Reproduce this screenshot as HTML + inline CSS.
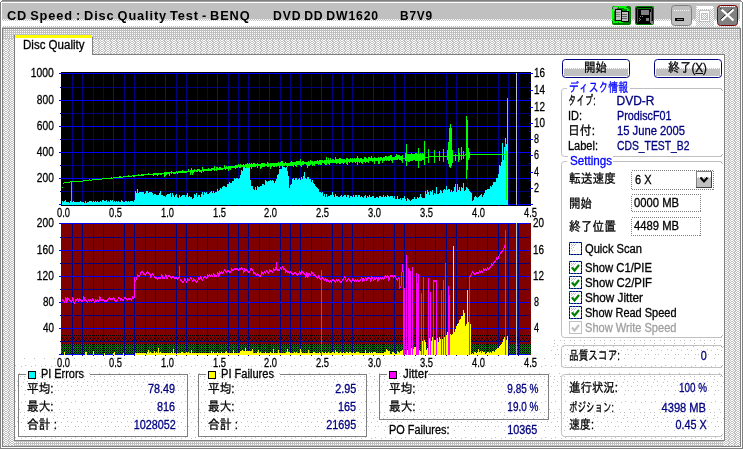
<!DOCTYPE html><html><head><meta charset="utf-8"><title>CD Speed : Disc Quality Test</title><style>
html,body{margin:0;padding:0;background:#c0c0c0}body{width:743px;height:449px;overflow:hidden;position:relative;font-family:"Liberation Sans","IPAGothic","Noto Sans CJK JP",sans-serif}
#bg{position:absolute;left:0;top:0}#tx{position:absolute;left:0;top:0;width:743px;height:449px;will-change:transform}
.t{position:absolute;white-space:pre;line-height:16px;height:16px;display:block;-webkit-text-stroke:0.3px}
.l{transform-origin:0 0}.r{transform-origin:100% 0}.b{font-weight:bold}
</style></head><body>
<svg id="bg" width="743" height="449" viewBox="0 0 743 449" shape-rendering="crispEdges">

<defs>
<pattern id="dz" width="6" height="4" patternUnits="userSpaceOnUse"><rect width="6" height="4" fill="#c0c0c0"/><g fill="#fff"><rect x="0" y="0" width="1" height="1"/><rect x="3" y="0" width="1" height="1"/><rect x="1" y="1" width="1" height="1"/><rect x="4" y="1" width="1" height="1"/><rect x="2" y="2" width="1" height="1"/><rect x="5" y="2" width="1" height="1"/><rect x="1" y="3" width="1" height="1"/><rect x="4" y="3" width="1" height="1"/><rect x="5" y="0" width="1" height="1"/><rect x="0" y="2" width="1" height="1"/></g></pattern>
<pattern id="q25" width="2" height="2" patternUnits="userSpaceOnUse">
<rect width="2" height="2" fill="#c0c0c0"/><rect x="0" y="1" width="1" height="1" fill="#fff"/>
</pattern>
<pattern id="q25b" width="2" height="2" patternUnits="userSpaceOnUse">
<rect width="2" height="2" fill="#c0c0c0"/><rect x="1" y="0" width="1" height="1" fill="#fff"/>
</pattern>
<pattern id="ck" width="2" height="2" patternUnits="userSpaceOnUse">
<rect width="2" height="2" fill="#c0c0c0"/><rect x="0" y="0" width="1" height="1" fill="#fff"/><rect x="1" y="1" width="1" height="1" fill="#fff"/>
</pattern>
<pattern id="gk" width="4" height="4" patternUnits="userSpaceOnUse">
<rect width="4" height="4" fill="#008000"/><g fill="#000">
<rect x="0" y="0" width="1" height="1"/><rect x="2" y="0" width="1" height="1"/>
<rect x="1" y="1" width="1" height="1"/><rect x="3" y="1" width="1" height="1"/>
<rect x="0" y="2" width="1" height="1"/><rect x="2" y="2" width="1" height="1"/>
<rect x="3" y="3" width="1" height="1"/></g>
</pattern>
<pattern id="rk" x="61" y="335" width="4" height="6" patternUnits="userSpaceOnUse">
<rect width="4" height="6" fill="#800000"/><g fill="#000">
<rect x="1" y="0" width="1" height="1"/><rect x="3" y="0" width="1" height="1"/>
<rect x="0" y="2" width="1" height="1"/><rect x="2" y="2" width="1" height="1"/>
<rect x="1" y="3" width="1" height="1"/>
<rect x="2" y="4" width="1" height="1"/><rect x="0" y="4" width="1" height="1"/>
<rect x="3" y="5" width="1" height="1"/></g>
</pattern>
<pattern id="dots" width="10" height="36" patternUnits="userSpaceOnUse">
<g fill="#c0c0c0">
<rect x="1" y="6" width="1" height="1"/><rect x="5" y="5" width="1" height="1"/>
<rect x="9" y="13" width="1" height="1"/>
<rect x="0" y="16" width="1" height="1"/><rect x="4" y="16" width="1" height="1"/>
<rect x="4" y="19" width="1" height="1"/>
<rect x="3" y="22" width="1" height="1"/><rect x="7" y="21" width="1" height="1"/>
<rect x="1" y="26" width="1" height="1"/><rect x="7" y="25" width="1" height="1"/>
<rect x="5" y="30" width="1" height="1"/><rect x="8" y="30" width="1" height="1"/>
<rect x="4" y="34" width="1" height="1"/>
</g>
</pattern>
</defs>
<rect x="0" y="0" width="743" height="449" fill="#c0c0c0"/>
<rect x="0" y="21" width="743" height="6" fill="#fff"/>
<rect x="2" y="19" width="739" height="2" fill="url(#ck)"/>
<rect x="0" y="0" width="743" height="1" fill="#808080"/>
<rect x="1" y="1" width="741" height="1" fill="#a0a0a0"/>
<rect x="2" y="2" width="739" height="1" fill="#fff"/>
<rect x="2" y="26" width="739" height="1" fill="url(#ck)"/>
<rect x="2" y="27" width="739" height="1" fill="#c0c0c0"/>
<rect x="2" y="28" width="739" height="1" fill="#808080"/>
<rect x="3" y="29" width="737" height="417" fill="url(#dz)"/>
<rect x="3" y="29" width="737" height="10" fill="url(#q25)"/>
<rect x="15" y="441" width="709" height="5" fill="url(#q25b)"/>
<rect x="0" y="0" width="1" height="449" fill="#808080"/>
<rect x="1" y="2" width="1" height="446" fill="#fff"/>
<rect x="2" y="28" width="1" height="419" fill="#808080"/>
<rect x="742" y="0" width="1" height="449" fill="#808080"/>
<rect x="741" y="2" width="1" height="446" fill="#fff"/>
<rect x="740" y="2" width="1" height="26" fill="#fff"/>
<rect x="740" y="28" width="1" height="419" fill="#808080"/>
<rect x="0" y="448" width="743" height="1" fill="#808080"/>
<rect x="1" y="447" width="741" height="1" fill="#fff"/>
<rect x="2" y="446" width="739" height="1" fill="#808080"/>
<rect x="0" y="0" width="2" height="1" fill="#fff"/>
<rect x="0" y="1" width="1" height="1" fill="#fff"/>
<rect x="741" y="0" width="2" height="1" fill="#fff"/>
<rect x="742" y="1" width="1" height="1" fill="#fff"/>
<path d="M0.5 4.5 L0.5 2.5 L2.5 0.5 L4.5 0.5" stroke="#808080" fill="none" shape-rendering="auto"/>
<path d="M742.5 4.5 L742.5 2.5 L740.5 0.5 L738.5 0.5" stroke="#808080" fill="none" shape-rendering="auto"/>
<rect x="15" y="55" width="709" height="385" fill="#fff"/>
<rect x="92" y="54" width="633" height="1" fill="#808080"/>
<rect x="14" y="35" width="1" height="406" fill="#808080"/>
<rect x="724" y="54" width="1" height="387" fill="#808080"/>
<rect x="14" y="440" width="711" height="1" fill="#808080"/>
<rect x="15" y="35" width="77" height="20" fill="#fff"/>
<rect x="15" y="35" width="77" height="3" fill="#ffff00"/>
<rect x="92" y="37" width="1" height="18" fill="#808080"/>
<rect x="15" y="357" width="709" height="83" fill="url(#dots)"/>
<rect x="551" y="338" width="173" height="102" fill="url(#dots)"/>
<rect x="612" y="6" width="19" height="19" rx="2" ry="2" fill="#008000" shape-rendering="auto"/>
<rect x="614" y="6" width="13" height="1" fill="#00ff00"/>
<rect x="619" y="7" width="8" height="1" fill="#00ff00"/>
<rect x="612" y="9" width="2" height="12" fill="#00ff00"/>
<rect x="613" y="21" width="10" height="2" fill="#00ff00"/>
<rect x="624" y="8" width="4" height="1" fill="#00ff00"/>
<rect x="627" y="9" width="2" height="3" fill="#00ff00"/>
<rect x="626" y="7" width="1" height="1" fill="#008000"/>
<rect x="628" y="8" width="1" height="1" fill="#008000"/>
<rect x="629" y="11" width="1" height="1" fill="#008000"/>
<rect x="628" y="14" width="1" height="1" fill="#008000"/>
<rect x="615" y="21" width="1" height="1" fill="#008000"/>
<rect x="618" y="22" width="1" height="1" fill="#008000"/>
<rect x="621" y="21" width="1" height="1" fill="#008000"/>
<rect x="613" y="19" width="1" height="1" fill="#008000"/>
<path d="M613 7 h5 l-5 5 z" fill="#a0a0a0"/>
<rect x="615" y="9" width="6" height="11" fill="#c0c0c0" stroke="#000" stroke-width="1"/>
<rect x="621" y="11" width="7" height="10" fill="#c0c0c0" stroke="#000" stroke-width="1"/>
<rect x="622" y="14" width="5" height="1" fill="#606060"/>
<rect x="622" y="16" width="5" height="1" fill="#606060"/>
<rect x="622" y="18" width="5" height="1" fill="#606060"/>
<rect x="616" y="12" width="4" height="1" fill="#808080"/>
<rect x="616" y="14" width="4" height="1" fill="#808080"/>
<rect x="616" y="16" width="4" height="1" fill="#808080"/>
<rect x="635" y="6" width="19" height="19" rx="2" ry="2" fill="#008000" shape-rendering="auto"/>
<rect x="636.5" y="7.5" width="16" height="16" rx="1.5" ry="1.5" fill="#008000" stroke="#000" shape-rendering="auto"/>
<rect x="638" y="9" width="13" height="14" fill="#000"/>
<rect x="641" y="10" width="8" height="5" fill="#808080"/>
<rect x="646" y="18" width="3" height="3" fill="#808080"/>
<rect x="650" y="12" width="1" height="11" fill="#808080"/>
<rect x="651" y="21" width="2" height="3" fill="#808080"/>
<rect x="640" y="16" width="1" height="1" fill="#808080"/>
<rect x="642" y="16" width="1" height="1" fill="#808080"/>
<rect x="639" y="18" width="1" height="1" fill="#808080"/>
<rect x="640" y="19" width="1" height="1" fill="#808080"/>
<rect x="639" y="20" width="1" height="1" fill="#808080"/>
<rect x="671.5" y="5.5" width="20" height="20" rx="3" ry="3" fill="#c0c0c0" stroke="#808080" shape-rendering="auto"/>
<rect x="673" y="10" width="17" height="1" fill="url(#ck)"/>
<rect x="675" y="18" width="9" height="3" fill="#000"/>
<rect x="677" y="19" width="6" height="1" fill="#808080"/>
<rect x="696" y="6" width="18" height="20" fill="url(#ck)"/>
<rect x="697" y="6" width="16" height="3" fill="#fff"/>
<rect x="699" y="10" width="11" height="12" fill="#c0c0c0"/>
<rect x="700" y="11" width="9" height="10" fill="#fff"/>
<rect x="701" y="13" width="7" height="7" fill="#c0c0c0"/>
<rect x="702" y="14" width="5" height="5" fill="url(#ck)"/>
<rect x="717.5" y="5.5" width="20" height="20" rx="3" ry="3" fill="#808080" stroke="#800000" shape-rendering="auto"/>
<rect x="720" y="6" width="15" height="1" fill="url(#ck)"/>
<path d="M720.5 8.5 L732.5 19.5 M732.5 8.5 L720.5 19.5" stroke="#000" stroke-width="1" fill="none" shape-rendering="auto"/>
<path d="M721.5 9.5 L733.5 20.5 M733.5 9.5 L721.5 20.5" stroke="#fff" stroke-width="2.2" fill="none" shape-rendering="auto"/>
<rect x="61" y="72" width="470" height="134" fill="#000"/>
<rect x="72" y="73" width="1" height="132" fill="#000080"/>
<rect x="82" y="73" width="1" height="132" fill="#000080"/>
<rect x="93" y="73" width="1" height="132" fill="#000080"/>
<rect x="103" y="73" width="1" height="132" fill="#000080"/>
<rect x="113" y="73" width="1" height="132" fill="#0000ff"/>
<rect x="124" y="73" width="1" height="132" fill="#000080"/>
<rect x="134" y="73" width="1" height="132" fill="#000080"/>
<rect x="145" y="73" width="1" height="132" fill="#000080"/>
<rect x="155" y="73" width="1" height="132" fill="#000080"/>
<rect x="165" y="73" width="1" height="132" fill="#0000ff"/>
<rect x="176" y="73" width="1" height="132" fill="#000080"/>
<rect x="186" y="73" width="1" height="132" fill="#000080"/>
<rect x="197" y="73" width="1" height="132" fill="#000080"/>
<rect x="207" y="73" width="1" height="132" fill="#000080"/>
<rect x="217" y="73" width="1" height="132" fill="#0000ff"/>
<rect x="228" y="73" width="1" height="132" fill="#000080"/>
<rect x="238" y="73" width="1" height="132" fill="#000080"/>
<rect x="248" y="73" width="1" height="132" fill="#000080"/>
<rect x="259" y="73" width="1" height="132" fill="#000080"/>
<rect x="269" y="73" width="1" height="132" fill="#0000ff"/>
<rect x="280" y="73" width="1" height="132" fill="#000080"/>
<rect x="290" y="73" width="1" height="132" fill="#000080"/>
<rect x="300" y="73" width="1" height="132" fill="#000080"/>
<rect x="311" y="73" width="1" height="132" fill="#000080"/>
<rect x="321" y="73" width="1" height="132" fill="#0000ff"/>
<rect x="332" y="73" width="1" height="132" fill="#000080"/>
<rect x="342" y="73" width="1" height="132" fill="#000080"/>
<rect x="352" y="73" width="1" height="132" fill="#000080"/>
<rect x="363" y="73" width="1" height="132" fill="#000080"/>
<rect x="373" y="73" width="1" height="132" fill="#0000ff"/>
<rect x="383" y="73" width="1" height="132" fill="#000080"/>
<rect x="394" y="73" width="1" height="132" fill="#000080"/>
<rect x="404" y="73" width="1" height="132" fill="#000080"/>
<rect x="415" y="73" width="1" height="132" fill="#000080"/>
<rect x="425" y="73" width="1" height="132" fill="#0000ff"/>
<rect x="435" y="73" width="1" height="132" fill="#000080"/>
<rect x="446" y="73" width="1" height="132" fill="#000080"/>
<rect x="456" y="73" width="1" height="132" fill="#000080"/>
<rect x="467" y="73" width="1" height="132" fill="#000080"/>
<rect x="477" y="73" width="1" height="132" fill="#0000ff"/>
<rect x="487" y="73" width="1" height="132" fill="#000080"/>
<rect x="498" y="73" width="1" height="132" fill="#000080"/>
<rect x="508" y="73" width="1" height="132" fill="#000080"/>
<rect x="518" y="73" width="1" height="132" fill="#000080"/>
<rect x="59" y="204" width="472" height="1" fill="#0000ff"/>
<rect x="60" y="191" width="471" height="1" fill="#000080"/>
<rect x="59" y="178" width="472" height="1" fill="#0000ff"/>
<rect x="60" y="165" width="471" height="1" fill="#000080"/>
<rect x="59" y="152" width="472" height="1" fill="#0000ff"/>
<rect x="60" y="139" width="471" height="1" fill="#000080"/>
<rect x="59" y="126" width="472" height="1" fill="#0000ff"/>
<rect x="60" y="113" width="471" height="1" fill="#000080"/>
<rect x="59" y="100" width="472" height="1" fill="#0000ff"/>
<rect x="60" y="87" width="471" height="1" fill="#000080"/>
<rect x="59" y="73" width="472" height="1" fill="#0000ff"/>
<rect x="72" y="205" width="1" height="1" fill="#000080"/>
<rect x="82" y="205" width="1" height="1" fill="#000080"/>
<rect x="93" y="205" width="1" height="1" fill="#000080"/>
<rect x="103" y="205" width="1" height="1" fill="#000080"/>
<rect x="113" y="205" width="1" height="1" fill="#0000ff"/>
<rect x="124" y="205" width="1" height="1" fill="#000080"/>
<rect x="134" y="205" width="1" height="1" fill="#000080"/>
<rect x="145" y="205" width="1" height="1" fill="#000080"/>
<rect x="155" y="205" width="1" height="1" fill="#000080"/>
<rect x="165" y="205" width="1" height="1" fill="#0000ff"/>
<rect x="176" y="205" width="1" height="1" fill="#000080"/>
<rect x="186" y="205" width="1" height="1" fill="#000080"/>
<rect x="197" y="205" width="1" height="1" fill="#000080"/>
<rect x="207" y="205" width="1" height="1" fill="#000080"/>
<rect x="217" y="205" width="1" height="1" fill="#0000ff"/>
<rect x="228" y="205" width="1" height="1" fill="#000080"/>
<rect x="238" y="205" width="1" height="1" fill="#000080"/>
<rect x="248" y="205" width="1" height="1" fill="#000080"/>
<rect x="259" y="205" width="1" height="1" fill="#000080"/>
<rect x="269" y="205" width="1" height="1" fill="#0000ff"/>
<rect x="280" y="205" width="1" height="1" fill="#000080"/>
<rect x="290" y="205" width="1" height="1" fill="#000080"/>
<rect x="300" y="205" width="1" height="1" fill="#000080"/>
<rect x="311" y="205" width="1" height="1" fill="#000080"/>
<rect x="321" y="205" width="1" height="1" fill="#0000ff"/>
<rect x="332" y="205" width="1" height="1" fill="#000080"/>
<rect x="342" y="205" width="1" height="1" fill="#000080"/>
<rect x="352" y="205" width="1" height="1" fill="#000080"/>
<rect x="363" y="205" width="1" height="1" fill="#000080"/>
<rect x="373" y="205" width="1" height="1" fill="#0000ff"/>
<rect x="383" y="205" width="1" height="1" fill="#000080"/>
<rect x="394" y="205" width="1" height="1" fill="#000080"/>
<rect x="404" y="205" width="1" height="1" fill="#000080"/>
<rect x="415" y="205" width="1" height="1" fill="#000080"/>
<rect x="425" y="205" width="1" height="1" fill="#0000ff"/>
<rect x="435" y="205" width="1" height="1" fill="#000080"/>
<rect x="446" y="205" width="1" height="1" fill="#000080"/>
<rect x="456" y="205" width="1" height="1" fill="#000080"/>
<rect x="467" y="205" width="1" height="1" fill="#000080"/>
<rect x="477" y="205" width="1" height="1" fill="#0000ff"/>
<rect x="487" y="205" width="1" height="1" fill="#000080"/>
<rect x="498" y="205" width="1" height="1" fill="#000080"/>
<rect x="508" y="205" width="1" height="1" fill="#000080"/>
<rect x="518" y="205" width="1" height="1" fill="#000080"/>
<rect x="529" y="204" width="4" height="1" fill="#0000ff"/>
<rect x="529" y="196" width="2" height="1" fill="#0000ff"/>
<rect x="529" y="188" width="4" height="1" fill="#0000ff"/>
<rect x="529" y="180" width="2" height="1" fill="#0000ff"/>
<rect x="529" y="172" width="4" height="1" fill="#0000ff"/>
<rect x="529" y="163" width="2" height="1" fill="#0000ff"/>
<rect x="529" y="155" width="4" height="1" fill="#0000ff"/>
<rect x="529" y="147" width="2" height="1" fill="#0000ff"/>
<rect x="529" y="139" width="4" height="1" fill="#0000ff"/>
<rect x="529" y="131" width="2" height="1" fill="#0000ff"/>
<rect x="529" y="123" width="4" height="1" fill="#0000ff"/>
<rect x="529" y="115" width="2" height="1" fill="#0000ff"/>
<rect x="529" y="107" width="4" height="1" fill="#0000ff"/>
<rect x="529" y="98" width="2" height="1" fill="#0000ff"/>
<rect x="529" y="90" width="4" height="1" fill="#0000ff"/>
<rect x="529" y="82" width="2" height="1" fill="#0000ff"/>
<rect x="529" y="73" width="4" height="1" fill="#0000ff"/>
<rect x="62" y="201" width="1" height="4" fill="#00ffff"/>
<rect x="63" y="202" width="1" height="3" fill="#00ffff"/>
<rect x="64" y="201" width="1" height="4" fill="#00ffff"/>
<rect x="65" y="200" width="1" height="5" fill="#00ffff"/>
<rect x="66" y="202" width="1" height="3" fill="#00ffff"/>
<rect x="67" y="202" width="1" height="3" fill="#00ffff"/>
<rect x="68" y="202" width="1" height="3" fill="#00ffff"/>
<rect x="69" y="203" width="1" height="2" fill="#00ffff"/>
<rect x="70" y="201" width="1" height="4" fill="#00ffff"/>
<rect x="71" y="201" width="1" height="4" fill="#00ffff"/>
<rect x="72" y="202" width="1" height="3" fill="#00ffff"/>
<rect x="73" y="201" width="1" height="4" fill="#00ffff"/>
<rect x="74" y="202" width="1" height="3" fill="#00ffff"/>
<rect x="75" y="202" width="1" height="3" fill="#00ffff"/>
<rect x="76" y="202" width="1" height="3" fill="#00ffff"/>
<rect x="77" y="202" width="1" height="3" fill="#00ffff"/>
<rect x="78" y="202" width="1" height="3" fill="#00ffff"/>
<rect x="79" y="202" width="1" height="3" fill="#00ffff"/>
<rect x="80" y="201" width="1" height="4" fill="#00ffff"/>
<rect x="81" y="202" width="1" height="3" fill="#00ffff"/>
<rect x="82" y="202" width="1" height="3" fill="#00ffff"/>
<rect x="83" y="202" width="1" height="3" fill="#00ffff"/>
<rect x="84" y="203" width="1" height="2" fill="#00ffff"/>
<rect x="85" y="201" width="1" height="4" fill="#00ffff"/>
<rect x="86" y="203" width="1" height="2" fill="#00ffff"/>
<rect x="87" y="202" width="1" height="3" fill="#00ffff"/>
<rect x="88" y="202" width="1" height="3" fill="#00ffff"/>
<rect x="89" y="201" width="1" height="4" fill="#00ffff"/>
<rect x="90" y="201" width="1" height="4" fill="#00ffff"/>
<rect x="91" y="201" width="1" height="4" fill="#00ffff"/>
<rect x="92" y="202" width="1" height="3" fill="#00ffff"/>
<rect x="93" y="201" width="1" height="4" fill="#00ffff"/>
<rect x="94" y="202" width="1" height="3" fill="#00ffff"/>
<rect x="95" y="201" width="1" height="4" fill="#00ffff"/>
<rect x="96" y="202" width="1" height="3" fill="#00ffff"/>
<rect x="97" y="201" width="1" height="4" fill="#00ffff"/>
<rect x="98" y="202" width="1" height="3" fill="#00ffff"/>
<rect x="99" y="202" width="1" height="3" fill="#00ffff"/>
<rect x="100" y="201" width="1" height="4" fill="#00ffff"/>
<rect x="101" y="202" width="1" height="3" fill="#00ffff"/>
<rect x="102" y="200" width="1" height="5" fill="#00ffff"/>
<rect x="103" y="200" width="1" height="5" fill="#00ffff"/>
<rect x="104" y="201" width="1" height="4" fill="#00ffff"/>
<rect x="105" y="201" width="1" height="4" fill="#00ffff"/>
<rect x="106" y="200" width="1" height="5" fill="#00ffff"/>
<rect x="107" y="202" width="1" height="3" fill="#00ffff"/>
<rect x="108" y="201" width="1" height="4" fill="#00ffff"/>
<rect x="109" y="202" width="1" height="3" fill="#00ffff"/>
<rect x="110" y="200" width="1" height="5" fill="#00ffff"/>
<rect x="111" y="201" width="1" height="4" fill="#00ffff"/>
<rect x="112" y="200" width="1" height="5" fill="#00ffff"/>
<rect x="113" y="202" width="1" height="3" fill="#00ffff"/>
<rect x="114" y="201" width="1" height="4" fill="#00ffff"/>
<rect x="115" y="202" width="1" height="3" fill="#00ffff"/>
<rect x="116" y="201" width="1" height="4" fill="#00ffff"/>
<rect x="117" y="202" width="1" height="3" fill="#00ffff"/>
<rect x="118" y="201" width="1" height="4" fill="#00ffff"/>
<rect x="119" y="202" width="1" height="3" fill="#00ffff"/>
<rect x="120" y="202" width="1" height="3" fill="#00ffff"/>
<rect x="121" y="200" width="1" height="5" fill="#00ffff"/>
<rect x="122" y="201" width="1" height="4" fill="#00ffff"/>
<rect x="123" y="202" width="1" height="3" fill="#00ffff"/>
<rect x="124" y="202" width="1" height="3" fill="#00ffff"/>
<rect x="125" y="201" width="1" height="4" fill="#00ffff"/>
<rect x="126" y="201" width="1" height="4" fill="#00ffff"/>
<rect x="127" y="202" width="1" height="3" fill="#00ffff"/>
<rect x="128" y="201" width="1" height="4" fill="#00ffff"/>
<rect x="129" y="202" width="1" height="3" fill="#00ffff"/>
<rect x="130" y="201" width="1" height="4" fill="#00ffff"/>
<rect x="131" y="201" width="1" height="4" fill="#00ffff"/>
<rect x="132" y="201" width="1" height="4" fill="#00ffff"/>
<rect x="133" y="202" width="1" height="3" fill="#00ffff"/>
<rect x="134" y="200" width="1" height="5" fill="#00ffff"/>
<rect x="135" y="191" width="1" height="14" fill="#00ffff"/>
<rect x="136" y="193" width="1" height="12" fill="#00ffff"/>
<rect x="137" y="189" width="1" height="16" fill="#00ffff"/>
<rect x="138" y="193" width="1" height="12" fill="#00ffff"/>
<rect x="139" y="192" width="1" height="13" fill="#00ffff"/>
<rect x="140" y="192" width="1" height="13" fill="#00ffff"/>
<rect x="141" y="192" width="1" height="13" fill="#00ffff"/>
<rect x="142" y="192" width="1" height="13" fill="#00ffff"/>
<rect x="143" y="192" width="1" height="13" fill="#00ffff"/>
<rect x="144" y="194" width="1" height="11" fill="#00ffff"/>
<rect x="145" y="193" width="1" height="12" fill="#00ffff"/>
<rect x="146" y="191" width="1" height="14" fill="#00ffff"/>
<rect x="147" y="191" width="1" height="14" fill="#00ffff"/>
<rect x="148" y="193" width="1" height="12" fill="#00ffff"/>
<rect x="149" y="192" width="1" height="13" fill="#00ffff"/>
<rect x="150" y="192" width="1" height="13" fill="#00ffff"/>
<rect x="151" y="192" width="1" height="13" fill="#00ffff"/>
<rect x="152" y="193" width="1" height="12" fill="#00ffff"/>
<rect x="153" y="195" width="1" height="10" fill="#00ffff"/>
<rect x="154" y="194" width="1" height="11" fill="#00ffff"/>
<rect x="155" y="194" width="1" height="11" fill="#00ffff"/>
<rect x="156" y="195" width="1" height="10" fill="#00ffff"/>
<rect x="157" y="195" width="1" height="10" fill="#00ffff"/>
<rect x="158" y="195" width="1" height="10" fill="#00ffff"/>
<rect x="159" y="193" width="1" height="12" fill="#00ffff"/>
<rect x="160" y="191" width="1" height="14" fill="#00ffff"/>
<rect x="161" y="195" width="1" height="10" fill="#00ffff"/>
<rect x="162" y="195" width="1" height="10" fill="#00ffff"/>
<rect x="163" y="196" width="1" height="9" fill="#00ffff"/>
<rect x="164" y="196" width="1" height="9" fill="#00ffff"/>
<rect x="165" y="197" width="1" height="8" fill="#00ffff"/>
<rect x="166" y="195" width="1" height="10" fill="#00ffff"/>
<rect x="167" y="194" width="1" height="11" fill="#00ffff"/>
<rect x="168" y="194" width="1" height="11" fill="#00ffff"/>
<rect x="169" y="194" width="1" height="11" fill="#00ffff"/>
<rect x="170" y="193" width="1" height="12" fill="#00ffff"/>
<rect x="171" y="197" width="1" height="8" fill="#00ffff"/>
<rect x="172" y="193" width="1" height="12" fill="#00ffff"/>
<rect x="173" y="195" width="1" height="10" fill="#00ffff"/>
<rect x="174" y="197" width="1" height="8" fill="#00ffff"/>
<rect x="175" y="195" width="1" height="10" fill="#00ffff"/>
<rect x="176" y="194" width="1" height="11" fill="#00ffff"/>
<rect x="177" y="197" width="1" height="8" fill="#00ffff"/>
<rect x="178" y="198" width="1" height="7" fill="#00ffff"/>
<rect x="179" y="195" width="1" height="10" fill="#00ffff"/>
<rect x="180" y="197" width="1" height="8" fill="#00ffff"/>
<rect x="181" y="196" width="1" height="9" fill="#00ffff"/>
<rect x="182" y="195" width="1" height="10" fill="#00ffff"/>
<rect x="183" y="195" width="1" height="10" fill="#00ffff"/>
<rect x="184" y="195" width="1" height="10" fill="#00ffff"/>
<rect x="185" y="197" width="1" height="8" fill="#00ffff"/>
<rect x="186" y="195" width="1" height="10" fill="#00ffff"/>
<rect x="187" y="193" width="1" height="12" fill="#00ffff"/>
<rect x="188" y="197" width="1" height="8" fill="#00ffff"/>
<rect x="189" y="196" width="1" height="9" fill="#00ffff"/>
<rect x="190" y="197" width="1" height="8" fill="#00ffff"/>
<rect x="191" y="197" width="1" height="8" fill="#00ffff"/>
<rect x="192" y="199" width="1" height="6" fill="#00ffff"/>
<rect x="193" y="198" width="1" height="7" fill="#00ffff"/>
<rect x="194" y="194" width="1" height="11" fill="#00ffff"/>
<rect x="195" y="195" width="1" height="10" fill="#00ffff"/>
<rect x="196" y="193" width="1" height="12" fill="#00ffff"/>
<rect x="197" y="197" width="1" height="8" fill="#00ffff"/>
<rect x="198" y="195" width="1" height="10" fill="#00ffff"/>
<rect x="199" y="195" width="1" height="10" fill="#00ffff"/>
<rect x="200" y="197" width="1" height="8" fill="#00ffff"/>
<rect x="201" y="194" width="1" height="11" fill="#00ffff"/>
<rect x="202" y="192" width="1" height="13" fill="#00ffff"/>
<rect x="203" y="195" width="1" height="10" fill="#00ffff"/>
<rect x="204" y="192" width="1" height="13" fill="#00ffff"/>
<rect x="205" y="193" width="1" height="12" fill="#00ffff"/>
<rect x="206" y="192" width="1" height="13" fill="#00ffff"/>
<rect x="207" y="194" width="1" height="11" fill="#00ffff"/>
<rect x="208" y="194" width="1" height="11" fill="#00ffff"/>
<rect x="209" y="193" width="1" height="12" fill="#00ffff"/>
<rect x="210" y="192" width="1" height="13" fill="#00ffff"/>
<rect x="211" y="191" width="1" height="14" fill="#00ffff"/>
<rect x="212" y="193" width="1" height="12" fill="#00ffff"/>
<rect x="213" y="191" width="1" height="14" fill="#00ffff"/>
<rect x="214" y="193" width="1" height="12" fill="#00ffff"/>
<rect x="215" y="192" width="1" height="13" fill="#00ffff"/>
<rect x="216" y="192" width="1" height="13" fill="#00ffff"/>
<rect x="217" y="189" width="1" height="16" fill="#00ffff"/>
<rect x="218" y="191" width="1" height="14" fill="#00ffff"/>
<rect x="219" y="190" width="1" height="15" fill="#00ffff"/>
<rect x="220" y="188" width="1" height="17" fill="#00ffff"/>
<rect x="221" y="189" width="1" height="16" fill="#00ffff"/>
<rect x="222" y="187" width="1" height="18" fill="#00ffff"/>
<rect x="223" y="186" width="1" height="19" fill="#00ffff"/>
<rect x="224" y="186" width="1" height="19" fill="#00ffff"/>
<rect x="225" y="187" width="1" height="18" fill="#00ffff"/>
<rect x="226" y="187" width="1" height="18" fill="#00ffff"/>
<rect x="227" y="184" width="1" height="21" fill="#00ffff"/>
<rect x="228" y="184" width="1" height="21" fill="#00ffff"/>
<rect x="229" y="182" width="1" height="23" fill="#00ffff"/>
<rect x="230" y="183" width="1" height="22" fill="#00ffff"/>
<rect x="231" y="183" width="1" height="22" fill="#00ffff"/>
<rect x="232" y="181" width="1" height="24" fill="#00ffff"/>
<rect x="233" y="181" width="1" height="24" fill="#00ffff"/>
<rect x="234" y="178" width="1" height="27" fill="#00ffff"/>
<rect x="235" y="179" width="1" height="26" fill="#00ffff"/>
<rect x="236" y="178" width="1" height="27" fill="#00ffff"/>
<rect x="237" y="178" width="1" height="27" fill="#00ffff"/>
<rect x="238" y="179" width="1" height="26" fill="#00ffff"/>
<rect x="239" y="178" width="1" height="27" fill="#00ffff"/>
<rect x="240" y="175" width="1" height="30" fill="#00ffff"/>
<rect x="241" y="170" width="1" height="35" fill="#00ffff"/>
<rect x="242" y="171" width="1" height="34" fill="#00ffff"/>
<rect x="243" y="168" width="1" height="37" fill="#00ffff"/>
<rect x="244" y="167" width="1" height="38" fill="#00ffff"/>
<rect x="245" y="168" width="1" height="37" fill="#00ffff"/>
<rect x="246" y="167" width="1" height="38" fill="#00ffff"/>
<rect x="247" y="166" width="1" height="39" fill="#00ffff"/>
<rect x="248" y="167" width="1" height="38" fill="#00ffff"/>
<rect x="249" y="165" width="1" height="40" fill="#00ffff"/>
<rect x="250" y="180" width="1" height="25" fill="#00ffff"/>
<rect x="251" y="186" width="1" height="19" fill="#00ffff"/>
<rect x="252" y="186" width="1" height="19" fill="#00ffff"/>
<rect x="253" y="189" width="1" height="16" fill="#00ffff"/>
<rect x="254" y="190" width="1" height="15" fill="#00ffff"/>
<rect x="255" y="187" width="1" height="18" fill="#00ffff"/>
<rect x="256" y="190" width="1" height="15" fill="#00ffff"/>
<rect x="257" y="186" width="1" height="19" fill="#00ffff"/>
<rect x="258" y="187" width="1" height="18" fill="#00ffff"/>
<rect x="259" y="187" width="1" height="18" fill="#00ffff"/>
<rect x="260" y="186" width="1" height="19" fill="#00ffff"/>
<rect x="261" y="186" width="1" height="19" fill="#00ffff"/>
<rect x="262" y="184" width="1" height="21" fill="#00ffff"/>
<rect x="263" y="184" width="1" height="21" fill="#00ffff"/>
<rect x="264" y="185" width="1" height="20" fill="#00ffff"/>
<rect x="265" y="180" width="1" height="25" fill="#00ffff"/>
<rect x="266" y="181" width="1" height="24" fill="#00ffff"/>
<rect x="267" y="182" width="1" height="23" fill="#00ffff"/>
<rect x="268" y="181" width="1" height="24" fill="#00ffff"/>
<rect x="269" y="181" width="1" height="24" fill="#00ffff"/>
<rect x="270" y="180" width="1" height="25" fill="#00ffff"/>
<rect x="271" y="181" width="1" height="24" fill="#00ffff"/>
<rect x="272" y="180" width="1" height="25" fill="#00ffff"/>
<rect x="273" y="181" width="1" height="24" fill="#00ffff"/>
<rect x="274" y="183" width="1" height="22" fill="#00ffff"/>
<rect x="275" y="181" width="1" height="24" fill="#00ffff"/>
<rect x="276" y="179" width="1" height="26" fill="#00ffff"/>
<rect x="277" y="175" width="1" height="30" fill="#00ffff"/>
<rect x="278" y="174" width="1" height="31" fill="#00ffff"/>
<rect x="279" y="169" width="1" height="36" fill="#00ffff"/>
<rect x="280" y="169" width="1" height="36" fill="#00ffff"/>
<rect x="281" y="169" width="1" height="36" fill="#00ffff"/>
<rect x="282" y="166" width="1" height="39" fill="#00ffff"/>
<rect x="283" y="167" width="1" height="38" fill="#00ffff"/>
<rect x="284" y="167" width="1" height="38" fill="#00ffff"/>
<rect x="285" y="168" width="1" height="37" fill="#00ffff"/>
<rect x="286" y="167" width="1" height="38" fill="#00ffff"/>
<rect x="287" y="171" width="1" height="34" fill="#00ffff"/>
<rect x="288" y="176" width="1" height="29" fill="#00ffff"/>
<rect x="289" y="188" width="1" height="17" fill="#00ffff"/>
<rect x="290" y="185" width="1" height="20" fill="#00ffff"/>
<rect x="291" y="184" width="1" height="21" fill="#00ffff"/>
<rect x="292" y="179" width="1" height="26" fill="#00ffff"/>
<rect x="293" y="178" width="1" height="27" fill="#00ffff"/>
<rect x="294" y="180" width="1" height="25" fill="#00ffff"/>
<rect x="295" y="178" width="1" height="27" fill="#00ffff"/>
<rect x="296" y="178" width="1" height="27" fill="#00ffff"/>
<rect x="297" y="180" width="1" height="25" fill="#00ffff"/>
<rect x="298" y="179" width="1" height="26" fill="#00ffff"/>
<rect x="299" y="178" width="1" height="27" fill="#00ffff"/>
<rect x="300" y="180" width="1" height="25" fill="#00ffff"/>
<rect x="301" y="177" width="1" height="28" fill="#00ffff"/>
<rect x="302" y="179" width="1" height="26" fill="#00ffff"/>
<rect x="303" y="176" width="1" height="29" fill="#00ffff"/>
<rect x="304" y="172" width="1" height="33" fill="#00ffff"/>
<rect x="305" y="178" width="1" height="27" fill="#00ffff"/>
<rect x="306" y="179" width="1" height="26" fill="#00ffff"/>
<rect x="307" y="177" width="1" height="28" fill="#00ffff"/>
<rect x="308" y="177" width="1" height="28" fill="#00ffff"/>
<rect x="309" y="179" width="1" height="26" fill="#00ffff"/>
<rect x="310" y="179" width="1" height="26" fill="#00ffff"/>
<rect x="311" y="182" width="1" height="23" fill="#00ffff"/>
<rect x="312" y="180" width="1" height="25" fill="#00ffff"/>
<rect x="313" y="183" width="1" height="22" fill="#00ffff"/>
<rect x="314" y="184" width="1" height="21" fill="#00ffff"/>
<rect x="315" y="186" width="1" height="19" fill="#00ffff"/>
<rect x="316" y="187" width="1" height="18" fill="#00ffff"/>
<rect x="317" y="188" width="1" height="17" fill="#00ffff"/>
<rect x="318" y="189" width="1" height="16" fill="#00ffff"/>
<rect x="319" y="192" width="1" height="13" fill="#00ffff"/>
<rect x="320" y="192" width="1" height="13" fill="#00ffff"/>
<rect x="321" y="193" width="1" height="12" fill="#00ffff"/>
<rect x="322" y="192" width="1" height="13" fill="#00ffff"/>
<rect x="323" y="196" width="1" height="9" fill="#00ffff"/>
<rect x="324" y="194" width="1" height="11" fill="#00ffff"/>
<rect x="325" y="197" width="1" height="8" fill="#00ffff"/>
<rect x="326" y="194" width="1" height="11" fill="#00ffff"/>
<rect x="327" y="197" width="1" height="8" fill="#00ffff"/>
<rect x="328" y="196" width="1" height="9" fill="#00ffff"/>
<rect x="329" y="196" width="1" height="9" fill="#00ffff"/>
<rect x="330" y="195" width="1" height="10" fill="#00ffff"/>
<rect x="331" y="195" width="1" height="10" fill="#00ffff"/>
<rect x="332" y="192" width="1" height="13" fill="#00ffff"/>
<rect x="333" y="195" width="1" height="10" fill="#00ffff"/>
<rect x="334" y="197" width="1" height="8" fill="#00ffff"/>
<rect x="335" y="194" width="1" height="11" fill="#00ffff"/>
<rect x="336" y="196" width="1" height="9" fill="#00ffff"/>
<rect x="337" y="196" width="1" height="9" fill="#00ffff"/>
<rect x="338" y="197" width="1" height="8" fill="#00ffff"/>
<rect x="339" y="197" width="1" height="8" fill="#00ffff"/>
<rect x="340" y="196" width="1" height="9" fill="#00ffff"/>
<rect x="341" y="195" width="1" height="10" fill="#00ffff"/>
<rect x="342" y="197" width="1" height="8" fill="#00ffff"/>
<rect x="343" y="196" width="1" height="9" fill="#00ffff"/>
<rect x="344" y="195" width="1" height="10" fill="#00ffff"/>
<rect x="345" y="195" width="1" height="10" fill="#00ffff"/>
<rect x="346" y="197" width="1" height="8" fill="#00ffff"/>
<rect x="347" y="195" width="1" height="10" fill="#00ffff"/>
<rect x="348" y="195" width="1" height="10" fill="#00ffff"/>
<rect x="349" y="198" width="1" height="7" fill="#00ffff"/>
<rect x="350" y="196" width="1" height="9" fill="#00ffff"/>
<rect x="351" y="196" width="1" height="9" fill="#00ffff"/>
<rect x="352" y="197" width="1" height="8" fill="#00ffff"/>
<rect x="353" y="195" width="1" height="10" fill="#00ffff"/>
<rect x="354" y="197" width="1" height="8" fill="#00ffff"/>
<rect x="355" y="195" width="1" height="10" fill="#00ffff"/>
<rect x="356" y="195" width="1" height="10" fill="#00ffff"/>
<rect x="357" y="197" width="1" height="8" fill="#00ffff"/>
<rect x="358" y="195" width="1" height="10" fill="#00ffff"/>
<rect x="359" y="195" width="1" height="10" fill="#00ffff"/>
<rect x="360" y="197" width="1" height="8" fill="#00ffff"/>
<rect x="361" y="196" width="1" height="9" fill="#00ffff"/>
<rect x="362" y="197" width="1" height="8" fill="#00ffff"/>
<rect x="363" y="198" width="1" height="7" fill="#00ffff"/>
<rect x="364" y="196" width="1" height="9" fill="#00ffff"/>
<rect x="365" y="195" width="1" height="10" fill="#00ffff"/>
<rect x="366" y="198" width="1" height="7" fill="#00ffff"/>
<rect x="367" y="196" width="1" height="9" fill="#00ffff"/>
<rect x="368" y="197" width="1" height="8" fill="#00ffff"/>
<rect x="369" y="195" width="1" height="10" fill="#00ffff"/>
<rect x="370" y="197" width="1" height="8" fill="#00ffff"/>
<rect x="371" y="197" width="1" height="8" fill="#00ffff"/>
<rect x="372" y="196" width="1" height="9" fill="#00ffff"/>
<rect x="373" y="196" width="1" height="9" fill="#00ffff"/>
<rect x="374" y="198" width="1" height="7" fill="#00ffff"/>
<rect x="375" y="198" width="1" height="7" fill="#00ffff"/>
<rect x="376" y="197" width="1" height="8" fill="#00ffff"/>
<rect x="377" y="197" width="1" height="8" fill="#00ffff"/>
<rect x="378" y="198" width="1" height="7" fill="#00ffff"/>
<rect x="379" y="196" width="1" height="9" fill="#00ffff"/>
<rect x="380" y="196" width="1" height="9" fill="#00ffff"/>
<rect x="381" y="197" width="1" height="8" fill="#00ffff"/>
<rect x="382" y="197" width="1" height="8" fill="#00ffff"/>
<rect x="383" y="195" width="1" height="10" fill="#00ffff"/>
<rect x="384" y="197" width="1" height="8" fill="#00ffff"/>
<rect x="385" y="196" width="1" height="9" fill="#00ffff"/>
<rect x="386" y="197" width="1" height="8" fill="#00ffff"/>
<rect x="387" y="195" width="1" height="10" fill="#00ffff"/>
<rect x="388" y="196" width="1" height="9" fill="#00ffff"/>
<rect x="389" y="197" width="1" height="8" fill="#00ffff"/>
<rect x="390" y="196" width="1" height="9" fill="#00ffff"/>
<rect x="391" y="196" width="1" height="9" fill="#00ffff"/>
<rect x="392" y="196" width="1" height="9" fill="#00ffff"/>
<rect x="393" y="198" width="1" height="7" fill="#00ffff"/>
<rect x="394" y="196" width="1" height="9" fill="#00ffff"/>
<rect x="395" y="199" width="1" height="6" fill="#00ffff"/>
<rect x="396" y="199" width="1" height="6" fill="#00ffff"/>
<rect x="397" y="196" width="1" height="9" fill="#00ffff"/>
<rect x="398" y="199" width="1" height="6" fill="#00ffff"/>
<rect x="399" y="199" width="1" height="6" fill="#00ffff"/>
<rect x="400" y="198" width="1" height="7" fill="#00ffff"/>
<rect x="401" y="200" width="1" height="5" fill="#00ffff"/>
<rect x="402" y="198" width="1" height="7" fill="#00ffff"/>
<rect x="403" y="198" width="1" height="7" fill="#00ffff"/>
<rect x="404" y="196" width="1" height="9" fill="#00ffff"/>
<rect x="405" y="199" width="1" height="6" fill="#00ffff"/>
<rect x="406" y="201" width="1" height="4" fill="#00ffff"/>
<rect x="407" y="198" width="1" height="7" fill="#00ffff"/>
<rect x="408" y="199" width="1" height="6" fill="#00ffff"/>
<rect x="409" y="200" width="1" height="5" fill="#00ffff"/>
<rect x="410" y="201" width="1" height="4" fill="#00ffff"/>
<rect x="411" y="200" width="1" height="5" fill="#00ffff"/>
<rect x="412" y="199" width="1" height="6" fill="#00ffff"/>
<rect x="413" y="199" width="1" height="6" fill="#00ffff"/>
<rect x="414" y="197" width="1" height="8" fill="#00ffff"/>
<rect x="415" y="199" width="1" height="6" fill="#00ffff"/>
<rect x="416" y="199" width="1" height="6" fill="#00ffff"/>
<rect x="417" y="197" width="1" height="8" fill="#00ffff"/>
<rect x="418" y="198" width="1" height="7" fill="#00ffff"/>
<rect x="419" y="197" width="1" height="8" fill="#00ffff"/>
<rect x="420" y="194" width="1" height="11" fill="#00ffff"/>
<rect x="421" y="197" width="1" height="8" fill="#00ffff"/>
<rect x="422" y="198" width="1" height="7" fill="#00ffff"/>
<rect x="423" y="198" width="1" height="7" fill="#00ffff"/>
<rect x="424" y="198" width="1" height="7" fill="#00ffff"/>
<rect x="425" y="191" width="1" height="14" fill="#00ffff"/>
<rect x="426" y="194" width="1" height="11" fill="#00ffff"/>
<rect x="427" y="190" width="1" height="15" fill="#00ffff"/>
<rect x="428" y="192" width="1" height="13" fill="#00ffff"/>
<rect x="429" y="195" width="1" height="10" fill="#00ffff"/>
<rect x="430" y="191" width="1" height="14" fill="#00ffff"/>
<rect x="431" y="192" width="1" height="13" fill="#00ffff"/>
<rect x="432" y="190" width="1" height="15" fill="#00ffff"/>
<rect x="433" y="195" width="1" height="10" fill="#00ffff"/>
<rect x="434" y="193" width="1" height="12" fill="#00ffff"/>
<rect x="435" y="194" width="1" height="11" fill="#00ffff"/>
<rect x="436" y="187" width="1" height="18" fill="#00ffff"/>
<rect x="437" y="194" width="1" height="11" fill="#00ffff"/>
<rect x="438" y="194" width="1" height="11" fill="#00ffff"/>
<rect x="439" y="193" width="1" height="12" fill="#00ffff"/>
<rect x="440" y="190" width="1" height="15" fill="#00ffff"/>
<rect x="441" y="191" width="1" height="14" fill="#00ffff"/>
<rect x="442" y="193" width="1" height="12" fill="#00ffff"/>
<rect x="443" y="190" width="1" height="15" fill="#00ffff"/>
<rect x="444" y="189" width="1" height="16" fill="#00ffff"/>
<rect x="445" y="190" width="1" height="15" fill="#00ffff"/>
<rect x="446" y="186" width="1" height="19" fill="#00ffff"/>
<rect x="447" y="190" width="1" height="15" fill="#00ffff"/>
<rect x="448" y="189" width="1" height="16" fill="#00ffff"/>
<rect x="449" y="189" width="1" height="16" fill="#00ffff"/>
<rect x="450" y="192" width="1" height="13" fill="#00ffff"/>
<rect x="451" y="190" width="1" height="15" fill="#00ffff"/>
<rect x="452" y="192" width="1" height="13" fill="#00ffff"/>
<rect x="453" y="191" width="1" height="14" fill="#00ffff"/>
<rect x="454" y="187" width="1" height="18" fill="#00ffff"/>
<rect x="455" y="184" width="1" height="21" fill="#00ffff"/>
<rect x="456" y="192" width="1" height="13" fill="#00ffff"/>
<rect x="457" y="184" width="1" height="21" fill="#00ffff"/>
<rect x="458" y="190" width="1" height="15" fill="#00ffff"/>
<rect x="459" y="187" width="1" height="18" fill="#00ffff"/>
<rect x="460" y="191" width="1" height="14" fill="#00ffff"/>
<rect x="461" y="187" width="1" height="18" fill="#00ffff"/>
<rect x="462" y="188" width="1" height="17" fill="#00ffff"/>
<rect x="463" y="183" width="1" height="22" fill="#00ffff"/>
<rect x="464" y="191" width="1" height="14" fill="#00ffff"/>
<rect x="465" y="190" width="1" height="15" fill="#00ffff"/>
<rect x="466" y="187" width="1" height="18" fill="#00ffff"/>
<rect x="467" y="188" width="1" height="17" fill="#00ffff"/>
<rect x="468" y="189" width="1" height="16" fill="#00ffff"/>
<rect x="469" y="191" width="1" height="14" fill="#00ffff"/>
<rect x="470" y="192" width="1" height="13" fill="#00ffff"/>
<rect x="471" y="193" width="1" height="12" fill="#00ffff"/>
<rect x="472" y="201" width="1" height="4" fill="#00ffff"/>
<rect x="473" y="200" width="1" height="5" fill="#00ffff"/>
<rect x="474" y="197" width="1" height="8" fill="#00ffff"/>
<rect x="475" y="196" width="1" height="9" fill="#00ffff"/>
<rect x="476" y="197" width="1" height="8" fill="#00ffff"/>
<rect x="477" y="198" width="1" height="7" fill="#00ffff"/>
<rect x="478" y="197" width="1" height="8" fill="#00ffff"/>
<rect x="479" y="196" width="1" height="9" fill="#00ffff"/>
<rect x="480" y="195" width="1" height="10" fill="#00ffff"/>
<rect x="481" y="194" width="1" height="11" fill="#00ffff"/>
<rect x="482" y="197" width="1" height="8" fill="#00ffff"/>
<rect x="483" y="195" width="1" height="10" fill="#00ffff"/>
<rect x="484" y="193" width="1" height="12" fill="#00ffff"/>
<rect x="485" y="190" width="1" height="15" fill="#00ffff"/>
<rect x="486" y="190" width="1" height="15" fill="#00ffff"/>
<rect x="487" y="189" width="1" height="16" fill="#00ffff"/>
<rect x="488" y="189" width="1" height="16" fill="#00ffff"/>
<rect x="489" y="189" width="1" height="16" fill="#00ffff"/>
<rect x="490" y="186" width="1" height="19" fill="#00ffff"/>
<rect x="491" y="187" width="1" height="18" fill="#00ffff"/>
<rect x="492" y="185" width="1" height="20" fill="#00ffff"/>
<rect x="493" y="182" width="1" height="23" fill="#00ffff"/>
<rect x="494" y="182" width="1" height="23" fill="#00ffff"/>
<rect x="495" y="182" width="1" height="23" fill="#00ffff"/>
<rect x="496" y="178" width="1" height="27" fill="#00ffff"/>
<rect x="497" y="178" width="1" height="27" fill="#00ffff"/>
<rect x="498" y="174" width="1" height="31" fill="#00ffff"/>
<rect x="499" y="165" width="1" height="40" fill="#00ffff"/>
<rect x="500" y="166" width="1" height="39" fill="#00ffff"/>
<rect x="501" y="162" width="1" height="43" fill="#00ffff"/>
<rect x="502" y="143" width="1" height="62" fill="#00ffff"/>
<rect x="503" y="160" width="1" height="45" fill="#00ffff"/>
<rect x="504" y="147" width="1" height="58" fill="#00ffff"/>
<rect x="505" y="138" width="1" height="67" fill="#00ffff"/>
<rect x="506" y="144" width="1" height="61" fill="#00ffff"/>
<rect x="507" y="98" width="1" height="107" fill="#00ffff"/>
<rect x="62" y="187" width="1" height="1" fill="#00ff00"/>
<rect x="63" y="183" width="1" height="1" fill="#00ff00"/>
<rect x="64" y="182" width="1" height="1" fill="#00ff00"/>
<rect x="65" y="182" width="1" height="1" fill="#00ff00"/>
<rect x="66" y="182" width="1" height="1" fill="#00ff00"/>
<rect x="67" y="182" width="1" height="1" fill="#00ff00"/>
<rect x="68" y="182" width="1" height="1" fill="#00ff00"/>
<rect x="69" y="182" width="1" height="1" fill="#00ff00"/>
<rect x="70" y="181" width="1" height="1" fill="#00ff00"/>
<rect x="71" y="182" width="1" height="1" fill="#00ff00"/>
<rect x="72" y="181" width="1" height="1" fill="#00ff00"/>
<rect x="73" y="181" width="1" height="1" fill="#00ff00"/>
<rect x="74" y="181" width="1" height="1" fill="#00ff00"/>
<rect x="75" y="181" width="1" height="1" fill="#00ff00"/>
<rect x="76" y="181" width="1" height="1" fill="#00ff00"/>
<rect x="77" y="181" width="1" height="1" fill="#00ff00"/>
<rect x="78" y="181" width="1" height="1" fill="#00ff00"/>
<rect x="79" y="181" width="1" height="1" fill="#00ff00"/>
<rect x="80" y="181" width="1" height="1" fill="#00ff00"/>
<rect x="81" y="181" width="1" height="1" fill="#00ff00"/>
<rect x="82" y="181" width="1" height="1" fill="#00ff00"/>
<rect x="83" y="180" width="1" height="1" fill="#00ff00"/>
<rect x="84" y="180" width="1" height="1" fill="#00ff00"/>
<rect x="85" y="180" width="1" height="1" fill="#00ff00"/>
<rect x="86" y="180" width="1" height="1" fill="#00ff00"/>
<rect x="87" y="180" width="1" height="1" fill="#00ff00"/>
<rect x="88" y="180" width="1" height="1" fill="#00ff00"/>
<rect x="89" y="179" width="1" height="1" fill="#00ff00"/>
<rect x="90" y="180" width="1" height="1" fill="#00ff00"/>
<rect x="91" y="180" width="1" height="1" fill="#00ff00"/>
<rect x="92" y="179" width="1" height="1" fill="#00ff00"/>
<rect x="93" y="179" width="1" height="1" fill="#00ff00"/>
<rect x="94" y="179" width="1" height="1" fill="#00ff00"/>
<rect x="95" y="179" width="1" height="1" fill="#00ff00"/>
<rect x="96" y="179" width="1" height="1" fill="#00ff00"/>
<rect x="97" y="179" width="1" height="1" fill="#00ff00"/>
<rect x="98" y="179" width="1" height="1" fill="#00ff00"/>
<rect x="99" y="179" width="1" height="1" fill="#00ff00"/>
<rect x="100" y="179" width="1" height="1" fill="#00ff00"/>
<rect x="101" y="179" width="1" height="1" fill="#00ff00"/>
<rect x="102" y="178" width="1" height="1" fill="#00ff00"/>
<rect x="103" y="178" width="1" height="1" fill="#00ff00"/>
<rect x="104" y="178" width="1" height="1" fill="#00ff00"/>
<rect x="105" y="178" width="1" height="1" fill="#00ff00"/>
<rect x="106" y="178" width="1" height="1" fill="#00ff00"/>
<rect x="107" y="178" width="1" height="1" fill="#00ff00"/>
<rect x="108" y="178" width="1" height="1" fill="#00ff00"/>
<rect x="109" y="178" width="1" height="1" fill="#00ff00"/>
<rect x="110" y="178" width="1" height="1" fill="#00ff00"/>
<rect x="111" y="177" width="1" height="2" fill="#00ff00"/>
<rect x="112" y="178" width="1" height="1" fill="#00ff00"/>
<rect x="113" y="177" width="1" height="1" fill="#00ff00"/>
<rect x="114" y="177" width="1" height="1" fill="#00ff00"/>
<rect x="115" y="177" width="1" height="1" fill="#00ff00"/>
<rect x="116" y="177" width="1" height="1" fill="#00ff00"/>
<rect x="117" y="177" width="1" height="1" fill="#00ff00"/>
<rect x="118" y="177" width="1" height="1" fill="#00ff00"/>
<rect x="119" y="176" width="1" height="2" fill="#00ff00"/>
<rect x="120" y="176" width="1" height="2" fill="#00ff00"/>
<rect x="121" y="177" width="1" height="1" fill="#00ff00"/>
<rect x="122" y="177" width="1" height="1" fill="#00ff00"/>
<rect x="123" y="176" width="1" height="1" fill="#00ff00"/>
<rect x="124" y="176" width="1" height="1" fill="#00ff00"/>
<rect x="125" y="176" width="1" height="1" fill="#00ff00"/>
<rect x="126" y="176" width="1" height="1" fill="#00ff00"/>
<rect x="127" y="176" width="1" height="1" fill="#00ff00"/>
<rect x="128" y="175" width="1" height="2" fill="#00ff00"/>
<rect x="129" y="176" width="1" height="1" fill="#00ff00"/>
<rect x="130" y="176" width="1" height="1" fill="#00ff00"/>
<rect x="131" y="176" width="1" height="1" fill="#00ff00"/>
<rect x="132" y="175" width="1" height="1" fill="#00ff00"/>
<rect x="133" y="175" width="1" height="2" fill="#00ff00"/>
<rect x="134" y="175" width="1" height="2" fill="#00ff00"/>
<rect x="135" y="175" width="1" height="1" fill="#00ff00"/>
<rect x="136" y="175" width="1" height="1" fill="#00ff00"/>
<rect x="137" y="175" width="1" height="1" fill="#00ff00"/>
<rect x="138" y="174" width="1" height="2" fill="#00ff00"/>
<rect x="139" y="175" width="1" height="1" fill="#00ff00"/>
<rect x="140" y="175" width="1" height="1" fill="#00ff00"/>
<rect x="141" y="174" width="1" height="2" fill="#00ff00"/>
<rect x="142" y="174" width="1" height="2" fill="#00ff00"/>
<rect x="143" y="174" width="1" height="2" fill="#00ff00"/>
<rect x="144" y="174" width="1" height="1" fill="#00ff00"/>
<rect x="145" y="174" width="1" height="1" fill="#00ff00"/>
<rect x="146" y="174" width="1" height="1" fill="#00ff00"/>
<rect x="147" y="174" width="1" height="1" fill="#00ff00"/>
<rect x="148" y="173" width="1" height="2" fill="#00ff00"/>
<rect x="149" y="174" width="1" height="1" fill="#00ff00"/>
<rect x="150" y="174" width="1" height="1" fill="#00ff00"/>
<rect x="151" y="174" width="1" height="1" fill="#00ff00"/>
<rect x="152" y="174" width="1" height="1" fill="#00ff00"/>
<rect x="153" y="173" width="1" height="3" fill="#00ff00"/>
<rect x="154" y="173" width="1" height="2" fill="#00ff00"/>
<rect x="155" y="173" width="1" height="2" fill="#00ff00"/>
<rect x="156" y="173" width="1" height="2" fill="#00ff00"/>
<rect x="157" y="173" width="1" height="3" fill="#00ff00"/>
<rect x="158" y="173" width="1" height="2" fill="#00ff00"/>
<rect x="159" y="173" width="1" height="1" fill="#00ff00"/>
<rect x="160" y="173" width="1" height="2" fill="#00ff00"/>
<rect x="161" y="173" width="1" height="2" fill="#00ff00"/>
<rect x="162" y="173" width="1" height="1" fill="#00ff00"/>
<rect x="163" y="173" width="1" height="1" fill="#00ff00"/>
<rect x="164" y="172" width="1" height="5" fill="#00ff00"/>
<rect x="165" y="172" width="1" height="4" fill="#00ff00"/>
<rect x="166" y="172" width="1" height="3" fill="#00ff00"/>
<rect x="167" y="172" width="1" height="2" fill="#00ff00"/>
<rect x="168" y="172" width="1" height="2" fill="#00ff00"/>
<rect x="169" y="172" width="1" height="4" fill="#00ff00"/>
<rect x="170" y="172" width="1" height="1" fill="#00ff00"/>
<rect x="171" y="171" width="1" height="3" fill="#00ff00"/>
<rect x="172" y="172" width="1" height="1" fill="#00ff00"/>
<rect x="173" y="172" width="1" height="2" fill="#00ff00"/>
<rect x="174" y="172" width="1" height="2" fill="#00ff00"/>
<rect x="175" y="172" width="1" height="2" fill="#00ff00"/>
<rect x="176" y="171" width="1" height="2" fill="#00ff00"/>
<rect x="177" y="172" width="1" height="2" fill="#00ff00"/>
<rect x="178" y="171" width="1" height="2" fill="#00ff00"/>
<rect x="179" y="171" width="1" height="2" fill="#00ff00"/>
<rect x="180" y="171" width="1" height="2" fill="#00ff00"/>
<rect x="181" y="171" width="1" height="2" fill="#00ff00"/>
<rect x="182" y="170" width="1" height="3" fill="#00ff00"/>
<rect x="183" y="171" width="1" height="2" fill="#00ff00"/>
<rect x="184" y="171" width="1" height="2" fill="#00ff00"/>
<rect x="185" y="171" width="1" height="2" fill="#00ff00"/>
<rect x="186" y="171" width="1" height="2" fill="#00ff00"/>
<rect x="187" y="171" width="1" height="1" fill="#00ff00"/>
<rect x="188" y="169" width="1" height="3" fill="#00ff00"/>
<rect x="189" y="171" width="1" height="1" fill="#00ff00"/>
<rect x="190" y="170" width="1" height="5" fill="#00ff00"/>
<rect x="191" y="168" width="1" height="5" fill="#00ff00"/>
<rect x="192" y="170" width="1" height="5" fill="#00ff00"/>
<rect x="193" y="170" width="1" height="3" fill="#00ff00"/>
<rect x="194" y="169" width="1" height="3" fill="#00ff00"/>
<rect x="195" y="170" width="1" height="1" fill="#00ff00"/>
<rect x="196" y="170" width="1" height="2" fill="#00ff00"/>
<rect x="197" y="169" width="1" height="3" fill="#00ff00"/>
<rect x="198" y="169" width="1" height="2" fill="#00ff00"/>
<rect x="199" y="169" width="1" height="3" fill="#00ff00"/>
<rect x="200" y="170" width="1" height="2" fill="#00ff00"/>
<rect x="201" y="170" width="1" height="3" fill="#00ff00"/>
<rect x="202" y="167" width="1" height="4" fill="#00ff00"/>
<rect x="203" y="169" width="1" height="3" fill="#00ff00"/>
<rect x="204" y="169" width="1" height="2" fill="#00ff00"/>
<rect x="205" y="169" width="1" height="2" fill="#00ff00"/>
<rect x="206" y="169" width="1" height="2" fill="#00ff00"/>
<rect x="207" y="169" width="1" height="2" fill="#00ff00"/>
<rect x="208" y="168" width="1" height="3" fill="#00ff00"/>
<rect x="209" y="169" width="1" height="2" fill="#00ff00"/>
<rect x="210" y="169" width="1" height="2" fill="#00ff00"/>
<rect x="211" y="168" width="1" height="3" fill="#00ff00"/>
<rect x="212" y="168" width="1" height="2" fill="#00ff00"/>
<rect x="213" y="168" width="1" height="2" fill="#00ff00"/>
<rect x="214" y="166" width="1" height="5" fill="#00ff00"/>
<rect x="215" y="169" width="1" height="1" fill="#00ff00"/>
<rect x="216" y="167" width="1" height="4" fill="#00ff00"/>
<rect x="217" y="167" width="1" height="3" fill="#00ff00"/>
<rect x="218" y="168" width="1" height="2" fill="#00ff00"/>
<rect x="219" y="167" width="1" height="3" fill="#00ff00"/>
<rect x="220" y="167" width="1" height="3" fill="#00ff00"/>
<rect x="221" y="168" width="1" height="2" fill="#00ff00"/>
<rect x="222" y="168" width="1" height="2" fill="#00ff00"/>
<rect x="223" y="168" width="1" height="1" fill="#00ff00"/>
<rect x="224" y="165" width="1" height="4" fill="#00ff00"/>
<rect x="225" y="167" width="1" height="3" fill="#00ff00"/>
<rect x="226" y="166" width="1" height="3" fill="#00ff00"/>
<rect x="227" y="167" width="1" height="2" fill="#00ff00"/>
<rect x="228" y="166" width="1" height="5" fill="#00ff00"/>
<rect x="229" y="166" width="1" height="3" fill="#00ff00"/>
<rect x="230" y="166" width="1" height="4" fill="#00ff00"/>
<rect x="231" y="166" width="1" height="2" fill="#00ff00"/>
<rect x="232" y="166" width="1" height="2" fill="#00ff00"/>
<rect x="233" y="166" width="1" height="2" fill="#00ff00"/>
<rect x="234" y="166" width="1" height="2" fill="#00ff00"/>
<rect x="235" y="165" width="1" height="4" fill="#00ff00"/>
<rect x="236" y="165" width="1" height="3" fill="#00ff00"/>
<rect x="237" y="165" width="1" height="3" fill="#00ff00"/>
<rect x="238" y="164" width="1" height="3" fill="#00ff00"/>
<rect x="239" y="165" width="1" height="3" fill="#00ff00"/>
<rect x="240" y="164" width="1" height="4" fill="#00ff00"/>
<rect x="241" y="165" width="1" height="2" fill="#00ff00"/>
<rect x="242" y="165" width="1" height="2" fill="#00ff00"/>
<rect x="243" y="164" width="1" height="4" fill="#00ff00"/>
<rect x="244" y="165" width="1" height="2" fill="#00ff00"/>
<rect x="245" y="164" width="1" height="3" fill="#00ff00"/>
<rect x="246" y="164" width="1" height="4" fill="#00ff00"/>
<rect x="247" y="163" width="1" height="5" fill="#00ff00"/>
<rect x="248" y="164" width="1" height="4" fill="#00ff00"/>
<rect x="249" y="163" width="1" height="4" fill="#00ff00"/>
<rect x="250" y="164" width="1" height="3" fill="#00ff00"/>
<rect x="251" y="163" width="1" height="6" fill="#00ff00"/>
<rect x="252" y="164" width="1" height="3" fill="#00ff00"/>
<rect x="253" y="163" width="1" height="4" fill="#00ff00"/>
<rect x="254" y="163" width="1" height="4" fill="#00ff00"/>
<rect x="255" y="164" width="1" height="3" fill="#00ff00"/>
<rect x="256" y="164" width="1" height="2" fill="#00ff00"/>
<rect x="257" y="163" width="1" height="5" fill="#00ff00"/>
<rect x="258" y="164" width="1" height="2" fill="#00ff00"/>
<rect x="259" y="164" width="1" height="2" fill="#00ff00"/>
<rect x="260" y="164" width="1" height="5" fill="#00ff00"/>
<rect x="261" y="163" width="1" height="5" fill="#00ff00"/>
<rect x="262" y="163" width="1" height="4" fill="#00ff00"/>
<rect x="263" y="163" width="1" height="4" fill="#00ff00"/>
<rect x="264" y="163" width="1" height="4" fill="#00ff00"/>
<rect x="265" y="164" width="1" height="2" fill="#00ff00"/>
<rect x="266" y="164" width="1" height="2" fill="#00ff00"/>
<rect x="267" y="162" width="1" height="5" fill="#00ff00"/>
<rect x="268" y="163" width="1" height="4" fill="#00ff00"/>
<rect x="269" y="164" width="1" height="2" fill="#00ff00"/>
<rect x="270" y="163" width="1" height="6" fill="#00ff00"/>
<rect x="271" y="163" width="1" height="4" fill="#00ff00"/>
<rect x="272" y="163" width="1" height="3" fill="#00ff00"/>
<rect x="273" y="163" width="1" height="4" fill="#00ff00"/>
<rect x="274" y="163" width="1" height="4" fill="#00ff00"/>
<rect x="275" y="163" width="1" height="3" fill="#00ff00"/>
<rect x="276" y="163" width="1" height="4" fill="#00ff00"/>
<rect x="277" y="163" width="1" height="3" fill="#00ff00"/>
<rect x="278" y="162" width="1" height="4" fill="#00ff00"/>
<rect x="279" y="163" width="1" height="5" fill="#00ff00"/>
<rect x="280" y="162" width="1" height="4" fill="#00ff00"/>
<rect x="281" y="161" width="1" height="5" fill="#00ff00"/>
<rect x="282" y="161" width="1" height="5" fill="#00ff00"/>
<rect x="283" y="163" width="1" height="3" fill="#00ff00"/>
<rect x="284" y="163" width="1" height="3" fill="#00ff00"/>
<rect x="285" y="162" width="1" height="3" fill="#00ff00"/>
<rect x="286" y="163" width="1" height="3" fill="#00ff00"/>
<rect x="287" y="163" width="1" height="4" fill="#00ff00"/>
<rect x="288" y="163" width="1" height="3" fill="#00ff00"/>
<rect x="289" y="163" width="1" height="3" fill="#00ff00"/>
<rect x="290" y="162" width="1" height="4" fill="#00ff00"/>
<rect x="291" y="161" width="1" height="5" fill="#00ff00"/>
<rect x="292" y="162" width="1" height="4" fill="#00ff00"/>
<rect x="293" y="162" width="1" height="5" fill="#00ff00"/>
<rect x="294" y="162" width="1" height="3" fill="#00ff00"/>
<rect x="295" y="162" width="1" height="4" fill="#00ff00"/>
<rect x="296" y="161" width="1" height="6" fill="#00ff00"/>
<rect x="297" y="161" width="1" height="4" fill="#00ff00"/>
<rect x="298" y="161" width="1" height="4" fill="#00ff00"/>
<rect x="299" y="161" width="1" height="4" fill="#00ff00"/>
<rect x="300" y="159" width="1" height="7" fill="#00ff00"/>
<rect x="301" y="162" width="1" height="5" fill="#00ff00"/>
<rect x="302" y="161" width="1" height="4" fill="#00ff00"/>
<rect x="303" y="161" width="1" height="4" fill="#00ff00"/>
<rect x="304" y="162" width="1" height="2" fill="#00ff00"/>
<rect x="305" y="162" width="1" height="2" fill="#00ff00"/>
<rect x="306" y="162" width="1" height="3" fill="#00ff00"/>
<rect x="307" y="162" width="1" height="6" fill="#00ff00"/>
<rect x="308" y="161" width="1" height="5" fill="#00ff00"/>
<rect x="309" y="162" width="1" height="4" fill="#00ff00"/>
<rect x="310" y="160" width="1" height="5" fill="#00ff00"/>
<rect x="311" y="161" width="1" height="3" fill="#00ff00"/>
<rect x="312" y="161" width="1" height="5" fill="#00ff00"/>
<rect x="313" y="162" width="1" height="3" fill="#00ff00"/>
<rect x="314" y="161" width="1" height="5" fill="#00ff00"/>
<rect x="315" y="161" width="1" height="3" fill="#00ff00"/>
<rect x="316" y="161" width="1" height="3" fill="#00ff00"/>
<rect x="317" y="160" width="1" height="4" fill="#00ff00"/>
<rect x="318" y="161" width="1" height="4" fill="#00ff00"/>
<rect x="319" y="160" width="1" height="4" fill="#00ff00"/>
<rect x="320" y="160" width="1" height="5" fill="#00ff00"/>
<rect x="321" y="160" width="1" height="5" fill="#00ff00"/>
<rect x="322" y="160" width="1" height="3" fill="#00ff00"/>
<rect x="323" y="161" width="1" height="2" fill="#00ff00"/>
<rect x="324" y="160" width="1" height="4" fill="#00ff00"/>
<rect x="325" y="160" width="1" height="5" fill="#00ff00"/>
<rect x="326" y="157" width="1" height="8" fill="#00ff00"/>
<rect x="327" y="160" width="1" height="3" fill="#00ff00"/>
<rect x="328" y="158" width="1" height="6" fill="#00ff00"/>
<rect x="329" y="160" width="1" height="5" fill="#00ff00"/>
<rect x="330" y="158" width="1" height="5" fill="#00ff00"/>
<rect x="331" y="160" width="1" height="3" fill="#00ff00"/>
<rect x="332" y="159" width="1" height="4" fill="#00ff00"/>
<rect x="333" y="159" width="1" height="4" fill="#00ff00"/>
<rect x="334" y="160" width="1" height="3" fill="#00ff00"/>
<rect x="335" y="157" width="1" height="6" fill="#00ff00"/>
<rect x="336" y="159" width="1" height="5" fill="#00ff00"/>
<rect x="337" y="159" width="1" height="4" fill="#00ff00"/>
<rect x="338" y="159" width="1" height="4" fill="#00ff00"/>
<rect x="339" y="158" width="1" height="6" fill="#00ff00"/>
<rect x="340" y="158" width="1" height="6" fill="#00ff00"/>
<rect x="341" y="159" width="1" height="4" fill="#00ff00"/>
<rect x="342" y="159" width="1" height="4" fill="#00ff00"/>
<rect x="343" y="159" width="1" height="5" fill="#00ff00"/>
<rect x="344" y="159" width="1" height="4" fill="#00ff00"/>
<rect x="345" y="160" width="1" height="2" fill="#00ff00"/>
<rect x="346" y="158" width="1" height="6" fill="#00ff00"/>
<rect x="347" y="158" width="1" height="7" fill="#00ff00"/>
<rect x="348" y="159" width="1" height="3" fill="#00ff00"/>
<rect x="349" y="159" width="1" height="4" fill="#00ff00"/>
<rect x="350" y="158" width="1" height="4" fill="#00ff00"/>
<rect x="351" y="159" width="1" height="3" fill="#00ff00"/>
<rect x="352" y="158" width="1" height="5" fill="#00ff00"/>
<rect x="353" y="159" width="1" height="3" fill="#00ff00"/>
<rect x="354" y="158" width="1" height="4" fill="#00ff00"/>
<rect x="355" y="159" width="1" height="4" fill="#00ff00"/>
<rect x="356" y="158" width="1" height="4" fill="#00ff00"/>
<rect x="357" y="156" width="1" height="9" fill="#00ff00"/>
<rect x="358" y="158" width="1" height="4" fill="#00ff00"/>
<rect x="359" y="159" width="1" height="4" fill="#00ff00"/>
<rect x="360" y="158" width="1" height="4" fill="#00ff00"/>
<rect x="361" y="158" width="1" height="5" fill="#00ff00"/>
<rect x="362" y="159" width="1" height="5" fill="#00ff00"/>
<rect x="363" y="159" width="1" height="3" fill="#00ff00"/>
<rect x="364" y="157" width="1" height="5" fill="#00ff00"/>
<rect x="365" y="157" width="1" height="6" fill="#00ff00"/>
<rect x="366" y="158" width="1" height="4" fill="#00ff00"/>
<rect x="367" y="159" width="1" height="3" fill="#00ff00"/>
<rect x="368" y="157" width="1" height="6" fill="#00ff00"/>
<rect x="369" y="157" width="1" height="4" fill="#00ff00"/>
<rect x="370" y="158" width="1" height="3" fill="#00ff00"/>
<rect x="371" y="156" width="1" height="5" fill="#00ff00"/>
<rect x="372" y="158" width="1" height="4" fill="#00ff00"/>
<rect x="373" y="158" width="1" height="3" fill="#00ff00"/>
<rect x="374" y="157" width="1" height="7" fill="#00ff00"/>
<rect x="375" y="158" width="1" height="3" fill="#00ff00"/>
<rect x="376" y="158" width="1" height="3" fill="#00ff00"/>
<rect x="377" y="158" width="1" height="3" fill="#00ff00"/>
<rect x="378" y="157" width="1" height="7" fill="#00ff00"/>
<rect x="379" y="158" width="1" height="6" fill="#00ff00"/>
<rect x="380" y="157" width="1" height="4" fill="#00ff00"/>
<rect x="381" y="157" width="1" height="3" fill="#00ff00"/>
<rect x="382" y="158" width="1" height="5" fill="#00ff00"/>
<rect x="383" y="157" width="1" height="4" fill="#00ff00"/>
<rect x="384" y="157" width="1" height="4" fill="#00ff00"/>
<rect x="385" y="156" width="1" height="4" fill="#00ff00"/>
<rect x="386" y="156" width="1" height="5" fill="#00ff00"/>
<rect x="387" y="157" width="1" height="3" fill="#00ff00"/>
<rect x="388" y="156" width="1" height="5" fill="#00ff00"/>
<rect x="389" y="156" width="1" height="5" fill="#00ff00"/>
<rect x="390" y="155" width="1" height="5" fill="#00ff00"/>
<rect x="391" y="155" width="1" height="6" fill="#00ff00"/>
<rect x="392" y="157" width="1" height="6" fill="#00ff00"/>
<rect x="393" y="157" width="1" height="3" fill="#00ff00"/>
<rect x="394" y="157" width="1" height="3" fill="#00ff00"/>
<rect x="395" y="156" width="1" height="4" fill="#00ff00"/>
<rect x="396" y="154" width="1" height="6" fill="#00ff00"/>
<rect x="397" y="155" width="1" height="5" fill="#00ff00"/>
<rect x="398" y="155" width="1" height="4" fill="#00ff00"/>
<rect x="399" y="155" width="1" height="5" fill="#00ff00"/>
<rect x="400" y="156" width="1" height="4" fill="#00ff00"/>
<rect x="401" y="156" width="1" height="5" fill="#00ff00"/>
<rect x="402" y="155" width="1" height="8" fill="#00ff00"/>
<rect x="403" y="158" width="1" height="1" fill="#00ff00"/>
<rect x="404" y="158" width="1" height="1" fill="#00ff00"/>
<rect x="405" y="153" width="1" height="8" fill="#00ff00"/>
<rect x="406" y="144" width="1" height="22" fill="#00ff00"/>
<rect x="407" y="154" width="1" height="7" fill="#00ff00"/>
<rect x="408" y="154" width="1" height="8" fill="#00ff00"/>
<rect x="409" y="154" width="1" height="8" fill="#00ff00"/>
<rect x="410" y="154" width="1" height="7" fill="#00ff00"/>
<rect x="411" y="153" width="1" height="8" fill="#00ff00"/>
<rect x="412" y="154" width="1" height="7" fill="#00ff00"/>
<rect x="413" y="154" width="1" height="6" fill="#00ff00"/>
<rect x="414" y="154" width="1" height="6" fill="#00ff00"/>
<rect x="415" y="153" width="1" height="8" fill="#00ff00"/>
<rect x="416" y="153" width="1" height="8" fill="#00ff00"/>
<rect x="417" y="154" width="1" height="7" fill="#00ff00"/>
<rect x="418" y="148" width="1" height="20" fill="#00ff00"/>
<rect x="419" y="154" width="1" height="7" fill="#00ff00"/>
<rect x="420" y="153" width="1" height="8" fill="#00ff00"/>
<rect x="421" y="154" width="1" height="7" fill="#00ff00"/>
<rect x="422" y="153" width="1" height="7" fill="#00ff00"/>
<rect x="423" y="154" width="1" height="6" fill="#00ff00"/>
<rect x="424" y="141" width="1" height="24" fill="#00ff00"/>
<rect x="425" y="157" width="1" height="1" fill="#00ff00"/>
<rect x="426" y="157" width="1" height="1" fill="#00ff00"/>
<rect x="427" y="157" width="1" height="1" fill="#00ff00"/>
<rect x="428" y="149" width="1" height="14" fill="#00ff00"/>
<rect x="429" y="156" width="1" height="1" fill="#00ff00"/>
<rect x="430" y="156" width="1" height="1" fill="#00ff00"/>
<rect x="431" y="156" width="1" height="1" fill="#00ff00"/>
<rect x="432" y="156" width="1" height="1" fill="#00ff00"/>
<rect x="433" y="156" width="1" height="1" fill="#00ff00"/>
<rect x="434" y="150" width="1" height="13" fill="#00ff00"/>
<rect x="435" y="156" width="1" height="1" fill="#00ff00"/>
<rect x="436" y="156" width="1" height="1" fill="#00ff00"/>
<rect x="437" y="156" width="1" height="1" fill="#00ff00"/>
<rect x="438" y="156" width="1" height="1" fill="#00ff00"/>
<rect x="439" y="151" width="1" height="10" fill="#00ff00"/>
<rect x="440" y="156" width="1" height="1" fill="#00ff00"/>
<rect x="441" y="156" width="1" height="1" fill="#00ff00"/>
<rect x="442" y="156" width="1" height="1" fill="#00ff00"/>
<rect x="443" y="149" width="1" height="13" fill="#00ff00"/>
<rect x="444" y="156" width="1" height="1" fill="#00ff00"/>
<rect x="445" y="156" width="1" height="1" fill="#00ff00"/>
<rect x="446" y="156" width="1" height="1" fill="#00ff00"/>
<rect x="447" y="150" width="1" height="10" fill="#00ff00"/>
<rect x="448" y="142" width="1" height="22" fill="#00ff00"/>
<rect x="449" y="128" width="1" height="39" fill="#00ff00"/>
<rect x="450" y="124" width="1" height="44" fill="#00ff00"/>
<rect x="451" y="128" width="1" height="38" fill="#00ff00"/>
<rect x="452" y="150" width="1" height="13" fill="#00ff00"/>
<rect x="453" y="155" width="1" height="1" fill="#00ff00"/>
<rect x="454" y="155" width="1" height="1" fill="#00ff00"/>
<rect x="455" y="154" width="1" height="7" fill="#00ff00"/>
<rect x="456" y="155" width="1" height="1" fill="#00ff00"/>
<rect x="457" y="155" width="1" height="1" fill="#00ff00"/>
<rect x="458" y="148" width="1" height="14" fill="#00ff00"/>
<rect x="459" y="153" width="1" height="7" fill="#00ff00"/>
<rect x="460" y="155" width="1" height="1" fill="#00ff00"/>
<rect x="461" y="147" width="1" height="13" fill="#00ff00"/>
<rect x="462" y="155" width="1" height="1" fill="#00ff00"/>
<rect x="463" y="151" width="1" height="8" fill="#00ff00"/>
<rect x="464" y="155" width="1" height="1" fill="#00ff00"/>
<rect x="465" y="154" width="1" height="1" fill="#00ff00"/>
<rect x="466" y="116" width="1" height="63" fill="#00ff00"/>
<rect x="467" y="120" width="1" height="50" fill="#00ff00"/>
<rect x="468" y="148" width="1" height="12" fill="#00ff00"/>
<rect x="469" y="152" width="1" height="6" fill="#00ff00"/>
<rect x="470" y="154" width="1" height="1" fill="#00ff00"/>
<rect x="471" y="154" width="1" height="1" fill="#00ff00"/>
<rect x="472" y="154" width="1" height="1" fill="#00ff00"/>
<rect x="473" y="154" width="1" height="1" fill="#00ff00"/>
<rect x="474" y="154" width="1" height="1" fill="#00ff00"/>
<rect x="475" y="154" width="1" height="1" fill="#00ff00"/>
<rect x="476" y="154" width="1" height="1" fill="#00ff00"/>
<rect x="477" y="154" width="1" height="1" fill="#00ff00"/>
<rect x="478" y="154" width="1" height="1" fill="#00ff00"/>
<rect x="479" y="154" width="1" height="1" fill="#00ff00"/>
<rect x="480" y="154" width="1" height="1" fill="#00ff00"/>
<rect x="481" y="154" width="1" height="1" fill="#00ff00"/>
<rect x="482" y="154" width="1" height="1" fill="#00ff00"/>
<rect x="483" y="154" width="1" height="1" fill="#00ff00"/>
<rect x="484" y="154" width="1" height="1" fill="#00ff00"/>
<rect x="485" y="154" width="1" height="1" fill="#00ff00"/>
<rect x="486" y="154" width="1" height="1" fill="#00ff00"/>
<rect x="487" y="154" width="1" height="1" fill="#00ff00"/>
<rect x="488" y="154" width="1" height="1" fill="#00ff00"/>
<rect x="489" y="154" width="1" height="1" fill="#00ff00"/>
<rect x="490" y="154" width="1" height="1" fill="#00ff00"/>
<rect x="491" y="154" width="1" height="1" fill="#00ff00"/>
<rect x="492" y="154" width="1" height="1" fill="#00ff00"/>
<rect x="493" y="154" width="1" height="1" fill="#00ff00"/>
<rect x="494" y="154" width="1" height="1" fill="#00ff00"/>
<rect x="495" y="154" width="1" height="1" fill="#00ff00"/>
<rect x="496" y="154" width="1" height="1" fill="#00ff00"/>
<rect x="497" y="154" width="1" height="1" fill="#00ff00"/>
<rect x="498" y="154" width="1" height="1" fill="#00ff00"/>
<rect x="499" y="154" width="1" height="1" fill="#00ff00"/>
<rect x="500" y="154" width="1" height="1" fill="#00ff00"/>
<rect x="501" y="154" width="1" height="1" fill="#00ff00"/>
<rect x="502" y="154" width="1" height="1" fill="#00ff00"/>
<rect x="503" y="154" width="1" height="1" fill="#00ff00"/>
<rect x="504" y="154" width="1" height="1" fill="#00ff00"/>
<rect x="71" y="181" width="1" height="21" fill="#00ff00"/>
<rect x="505" y="142" width="1" height="19" fill="#00ff00"/>
<rect x="506" y="151" width="1" height="49" fill="#00ff00"/>
<rect x="516" y="73" width="1" height="132" fill="#c0c0c0"/>
<rect x="61" y="223" width="470" height="132" fill="#800000"/>
<rect x="61" y="335" width="470" height="6" fill="url(#rk)" />
<rect x="61" y="344" width="470" height="10" fill="url(#gk)"/>
<rect x="72" y="223" width="1" height="132" fill="#000080"/>
<rect x="82" y="223" width="1" height="132" fill="#000080"/>
<rect x="93" y="223" width="1" height="132" fill="#000080"/>
<rect x="103" y="223" width="1" height="132" fill="#000080"/>
<rect x="113" y="223" width="1" height="132" fill="#0000ff"/>
<rect x="124" y="223" width="1" height="132" fill="#000080"/>
<rect x="134" y="223" width="1" height="132" fill="#000080"/>
<rect x="145" y="223" width="1" height="132" fill="#000080"/>
<rect x="155" y="223" width="1" height="132" fill="#000080"/>
<rect x="165" y="223" width="1" height="132" fill="#0000ff"/>
<rect x="176" y="223" width="1" height="132" fill="#000080"/>
<rect x="186" y="223" width="1" height="132" fill="#000080"/>
<rect x="197" y="223" width="1" height="132" fill="#000080"/>
<rect x="207" y="223" width="1" height="132" fill="#000080"/>
<rect x="217" y="223" width="1" height="132" fill="#0000ff"/>
<rect x="228" y="223" width="1" height="132" fill="#000080"/>
<rect x="238" y="223" width="1" height="132" fill="#000080"/>
<rect x="248" y="223" width="1" height="132" fill="#000080"/>
<rect x="259" y="223" width="1" height="132" fill="#000080"/>
<rect x="269" y="223" width="1" height="132" fill="#0000ff"/>
<rect x="280" y="223" width="1" height="132" fill="#000080"/>
<rect x="290" y="223" width="1" height="132" fill="#000080"/>
<rect x="300" y="223" width="1" height="132" fill="#000080"/>
<rect x="311" y="223" width="1" height="132" fill="#000080"/>
<rect x="321" y="223" width="1" height="132" fill="#0000ff"/>
<rect x="332" y="223" width="1" height="132" fill="#000080"/>
<rect x="342" y="223" width="1" height="132" fill="#000080"/>
<rect x="352" y="223" width="1" height="132" fill="#000080"/>
<rect x="363" y="223" width="1" height="132" fill="#000080"/>
<rect x="373" y="223" width="1" height="132" fill="#0000ff"/>
<rect x="383" y="223" width="1" height="132" fill="#000080"/>
<rect x="394" y="223" width="1" height="132" fill="#000080"/>
<rect x="404" y="223" width="1" height="132" fill="#000080"/>
<rect x="415" y="223" width="1" height="132" fill="#000080"/>
<rect x="425" y="223" width="1" height="132" fill="#0000ff"/>
<rect x="435" y="223" width="1" height="132" fill="#000080"/>
<rect x="446" y="223" width="1" height="132" fill="#000080"/>
<rect x="456" y="223" width="1" height="132" fill="#000080"/>
<rect x="467" y="223" width="1" height="132" fill="#000080"/>
<rect x="477" y="223" width="1" height="132" fill="#0000ff"/>
<rect x="487" y="223" width="1" height="132" fill="#000080"/>
<rect x="498" y="223" width="1" height="132" fill="#000080"/>
<rect x="508" y="223" width="1" height="132" fill="#000080"/>
<rect x="518" y="223" width="1" height="132" fill="#000080"/>
<rect x="59" y="354" width="471" height="1" fill="#0000ff"/>
<rect x="60" y="341" width="470" height="1" fill="#000080"/>
<rect x="59" y="328" width="471" height="1" fill="#0000ff"/>
<rect x="60" y="315" width="470" height="1" fill="#000080"/>
<rect x="59" y="302" width="471" height="1" fill="#0000ff"/>
<rect x="60" y="289" width="470" height="1" fill="#000080"/>
<rect x="59" y="276" width="471" height="1" fill="#0000ff"/>
<rect x="60" y="263" width="470" height="1" fill="#000080"/>
<rect x="59" y="250" width="471" height="1" fill="#0000ff"/>
<rect x="60" y="237" width="470" height="1" fill="#000080"/>
<rect x="59" y="223" width="471" height="1" fill="#0000ff"/>
<rect x="72" y="355" width="1" height="1" fill="#000080"/>
<rect x="82" y="355" width="1" height="1" fill="#000080"/>
<rect x="93" y="355" width="1" height="1" fill="#000080"/>
<rect x="103" y="355" width="1" height="1" fill="#000080"/>
<rect x="113" y="355" width="1" height="1" fill="#0000ff"/>
<rect x="124" y="355" width="1" height="1" fill="#000080"/>
<rect x="134" y="355" width="1" height="1" fill="#000080"/>
<rect x="145" y="355" width="1" height="1" fill="#000080"/>
<rect x="155" y="355" width="1" height="1" fill="#000080"/>
<rect x="165" y="355" width="1" height="1" fill="#0000ff"/>
<rect x="176" y="355" width="1" height="1" fill="#000080"/>
<rect x="186" y="355" width="1" height="1" fill="#000080"/>
<rect x="197" y="355" width="1" height="1" fill="#000080"/>
<rect x="207" y="355" width="1" height="1" fill="#000080"/>
<rect x="217" y="355" width="1" height="1" fill="#0000ff"/>
<rect x="228" y="355" width="1" height="1" fill="#000080"/>
<rect x="238" y="355" width="1" height="1" fill="#000080"/>
<rect x="248" y="355" width="1" height="1" fill="#000080"/>
<rect x="259" y="355" width="1" height="1" fill="#000080"/>
<rect x="269" y="355" width="1" height="1" fill="#0000ff"/>
<rect x="280" y="355" width="1" height="1" fill="#000080"/>
<rect x="290" y="355" width="1" height="1" fill="#000080"/>
<rect x="300" y="355" width="1" height="1" fill="#000080"/>
<rect x="311" y="355" width="1" height="1" fill="#000080"/>
<rect x="321" y="355" width="1" height="1" fill="#0000ff"/>
<rect x="332" y="355" width="1" height="1" fill="#000080"/>
<rect x="342" y="355" width="1" height="1" fill="#000080"/>
<rect x="352" y="355" width="1" height="1" fill="#000080"/>
<rect x="363" y="355" width="1" height="1" fill="#000080"/>
<rect x="373" y="355" width="1" height="1" fill="#0000ff"/>
<rect x="383" y="355" width="1" height="1" fill="#000080"/>
<rect x="394" y="355" width="1" height="1" fill="#000080"/>
<rect x="404" y="355" width="1" height="1" fill="#000080"/>
<rect x="415" y="355" width="1" height="1" fill="#000080"/>
<rect x="425" y="355" width="1" height="1" fill="#0000ff"/>
<rect x="435" y="355" width="1" height="1" fill="#000080"/>
<rect x="446" y="355" width="1" height="1" fill="#000080"/>
<rect x="456" y="355" width="1" height="1" fill="#000080"/>
<rect x="467" y="355" width="1" height="1" fill="#000080"/>
<rect x="477" y="355" width="1" height="1" fill="#0000ff"/>
<rect x="487" y="355" width="1" height="1" fill="#000080"/>
<rect x="498" y="355" width="1" height="1" fill="#000080"/>
<rect x="508" y="355" width="1" height="1" fill="#000080"/>
<rect x="518" y="355" width="1" height="1" fill="#000080"/>
<rect x="64" y="352" width="1" height="3" fill="#ffff00"/>
<rect x="85" y="352" width="1" height="3" fill="#ffff00"/>
<rect x="86" y="352" width="1" height="3" fill="#ffff00"/>
<rect x="93" y="351" width="1" height="4" fill="#ffff00"/>
<rect x="104" y="353" width="1" height="2" fill="#ffff00"/>
<rect x="113" y="353" width="1" height="2" fill="#ffff00"/>
<rect x="114" y="352" width="1" height="3" fill="#ffff00"/>
<rect x="123" y="353" width="1" height="2" fill="#ffff00"/>
<rect x="135" y="353" width="1" height="2" fill="#ffff00"/>
<rect x="136" y="353" width="1" height="2" fill="#ffff00"/>
<rect x="137" y="353" width="1" height="2" fill="#ffff00"/>
<rect x="138" y="353" width="1" height="2" fill="#ffff00"/>
<rect x="139" y="353" width="1" height="2" fill="#ffff00"/>
<rect x="140" y="353" width="1" height="2" fill="#ffff00"/>
<rect x="141" y="353" width="1" height="2" fill="#ffff00"/>
<rect x="142" y="353" width="1" height="2" fill="#ffff00"/>
<rect x="143" y="353" width="1" height="2" fill="#ffff00"/>
<rect x="144" y="353" width="1" height="2" fill="#ffff00"/>
<rect x="145" y="353" width="1" height="2" fill="#ffff00"/>
<rect x="146" y="354" width="1" height="1" fill="#ffff00"/>
<rect x="147" y="352" width="1" height="3" fill="#ffff00"/>
<rect x="148" y="350" width="1" height="5" fill="#ffff00"/>
<rect x="149" y="353" width="1" height="2" fill="#ffff00"/>
<rect x="150" y="352" width="1" height="3" fill="#ffff00"/>
<rect x="151" y="353" width="1" height="2" fill="#ffff00"/>
<rect x="152" y="353" width="1" height="2" fill="#ffff00"/>
<rect x="153" y="353" width="1" height="2" fill="#ffff00"/>
<rect x="154" y="351" width="1" height="4" fill="#ffff00"/>
<rect x="155" y="353" width="1" height="2" fill="#ffff00"/>
<rect x="156" y="352" width="1" height="3" fill="#ffff00"/>
<rect x="157" y="353" width="1" height="2" fill="#ffff00"/>
<rect x="158" y="348" width="1" height="7" fill="#ffff00"/>
<rect x="159" y="353" width="1" height="2" fill="#ffff00"/>
<rect x="160" y="352" width="1" height="3" fill="#ffff00"/>
<rect x="161" y="353" width="1" height="2" fill="#ffff00"/>
<rect x="162" y="353" width="1" height="2" fill="#ffff00"/>
<rect x="163" y="353" width="1" height="2" fill="#ffff00"/>
<rect x="164" y="353" width="1" height="2" fill="#ffff00"/>
<rect x="165" y="353" width="1" height="2" fill="#ffff00"/>
<rect x="166" y="353" width="1" height="2" fill="#ffff00"/>
<rect x="167" y="353" width="1" height="2" fill="#ffff00"/>
<rect x="168" y="353" width="1" height="2" fill="#ffff00"/>
<rect x="169" y="353" width="1" height="2" fill="#ffff00"/>
<rect x="170" y="353" width="1" height="2" fill="#ffff00"/>
<rect x="171" y="352" width="1" height="3" fill="#ffff00"/>
<rect x="172" y="353" width="1" height="2" fill="#ffff00"/>
<rect x="173" y="349" width="1" height="6" fill="#ffff00"/>
<rect x="174" y="353" width="1" height="2" fill="#ffff00"/>
<rect x="175" y="353" width="1" height="2" fill="#ffff00"/>
<rect x="176" y="354" width="1" height="1" fill="#ffff00"/>
<rect x="177" y="353" width="1" height="2" fill="#ffff00"/>
<rect x="178" y="353" width="1" height="2" fill="#ffff00"/>
<rect x="179" y="353" width="1" height="2" fill="#ffff00"/>
<rect x="180" y="353" width="1" height="2" fill="#ffff00"/>
<rect x="181" y="352" width="1" height="3" fill="#ffff00"/>
<rect x="182" y="352" width="1" height="3" fill="#ffff00"/>
<rect x="183" y="353" width="1" height="2" fill="#ffff00"/>
<rect x="184" y="353" width="1" height="2" fill="#ffff00"/>
<rect x="185" y="353" width="1" height="2" fill="#ffff00"/>
<rect x="186" y="352" width="1" height="3" fill="#ffff00"/>
<rect x="187" y="353" width="1" height="2" fill="#ffff00"/>
<rect x="188" y="352" width="1" height="3" fill="#ffff00"/>
<rect x="189" y="353" width="1" height="2" fill="#ffff00"/>
<rect x="190" y="353" width="1" height="2" fill="#ffff00"/>
<rect x="191" y="350" width="1" height="5" fill="#ffff00"/>
<rect x="192" y="353" width="1" height="2" fill="#ffff00"/>
<rect x="193" y="353" width="1" height="2" fill="#ffff00"/>
<rect x="194" y="353" width="1" height="2" fill="#ffff00"/>
<rect x="195" y="353" width="1" height="2" fill="#ffff00"/>
<rect x="196" y="353" width="1" height="2" fill="#ffff00"/>
<rect x="197" y="353" width="1" height="2" fill="#ffff00"/>
<rect x="198" y="353" width="1" height="2" fill="#ffff00"/>
<rect x="199" y="353" width="1" height="2" fill="#ffff00"/>
<rect x="200" y="353" width="1" height="2" fill="#ffff00"/>
<rect x="201" y="353" width="1" height="2" fill="#ffff00"/>
<rect x="202" y="353" width="1" height="2" fill="#ffff00"/>
<rect x="203" y="353" width="1" height="2" fill="#ffff00"/>
<rect x="204" y="353" width="1" height="2" fill="#ffff00"/>
<rect x="205" y="353" width="1" height="2" fill="#ffff00"/>
<rect x="206" y="353" width="1" height="2" fill="#ffff00"/>
<rect x="207" y="353" width="1" height="2" fill="#ffff00"/>
<rect x="208" y="353" width="1" height="2" fill="#ffff00"/>
<rect x="209" y="353" width="1" height="2" fill="#ffff00"/>
<rect x="210" y="353" width="1" height="2" fill="#ffff00"/>
<rect x="211" y="351" width="1" height="4" fill="#ffff00"/>
<rect x="212" y="353" width="1" height="2" fill="#ffff00"/>
<rect x="213" y="352" width="1" height="3" fill="#ffff00"/>
<rect x="214" y="353" width="1" height="2" fill="#ffff00"/>
<rect x="215" y="353" width="1" height="2" fill="#ffff00"/>
<rect x="216" y="353" width="1" height="2" fill="#ffff00"/>
<rect x="217" y="352" width="1" height="3" fill="#ffff00"/>
<rect x="218" y="353" width="1" height="2" fill="#ffff00"/>
<rect x="219" y="353" width="1" height="2" fill="#ffff00"/>
<rect x="220" y="353" width="1" height="2" fill="#ffff00"/>
<rect x="221" y="352" width="1" height="3" fill="#ffff00"/>
<rect x="222" y="353" width="1" height="2" fill="#ffff00"/>
<rect x="223" y="353" width="1" height="2" fill="#ffff00"/>
<rect x="224" y="353" width="1" height="2" fill="#ffff00"/>
<rect x="225" y="352" width="1" height="3" fill="#ffff00"/>
<rect x="226" y="351" width="1" height="4" fill="#ffff00"/>
<rect x="227" y="353" width="1" height="2" fill="#ffff00"/>
<rect x="228" y="353" width="1" height="2" fill="#ffff00"/>
<rect x="229" y="353" width="1" height="2" fill="#ffff00"/>
<rect x="230" y="353" width="1" height="2" fill="#ffff00"/>
<rect x="231" y="353" width="1" height="2" fill="#ffff00"/>
<rect x="232" y="353" width="1" height="2" fill="#ffff00"/>
<rect x="233" y="350" width="1" height="5" fill="#ffff00"/>
<rect x="234" y="353" width="1" height="2" fill="#ffff00"/>
<rect x="235" y="353" width="1" height="2" fill="#ffff00"/>
<rect x="236" y="353" width="1" height="2" fill="#ffff00"/>
<rect x="237" y="353" width="1" height="2" fill="#ffff00"/>
<rect x="238" y="353" width="1" height="2" fill="#ffff00"/>
<rect x="239" y="353" width="1" height="2" fill="#ffff00"/>
<rect x="240" y="351" width="1" height="4" fill="#ffff00"/>
<rect x="241" y="351" width="1" height="4" fill="#ffff00"/>
<rect x="242" y="350" width="1" height="5" fill="#ffff00"/>
<rect x="243" y="351" width="1" height="4" fill="#ffff00"/>
<rect x="244" y="351" width="1" height="4" fill="#ffff00"/>
<rect x="245" y="348" width="1" height="7" fill="#ffff00"/>
<rect x="246" y="351" width="1" height="4" fill="#ffff00"/>
<rect x="247" y="351" width="1" height="4" fill="#ffff00"/>
<rect x="248" y="351" width="1" height="4" fill="#ffff00"/>
<rect x="249" y="351" width="1" height="4" fill="#ffff00"/>
<rect x="250" y="351" width="1" height="4" fill="#ffff00"/>
<rect x="251" y="351" width="1" height="4" fill="#ffff00"/>
<rect x="252" y="349" width="1" height="6" fill="#ffff00"/>
<rect x="253" y="353" width="1" height="2" fill="#ffff00"/>
<rect x="254" y="353" width="1" height="2" fill="#ffff00"/>
<rect x="255" y="353" width="1" height="2" fill="#ffff00"/>
<rect x="256" y="353" width="1" height="2" fill="#ffff00"/>
<rect x="257" y="352" width="1" height="3" fill="#ffff00"/>
<rect x="258" y="350" width="1" height="5" fill="#ffff00"/>
<rect x="259" y="353" width="1" height="2" fill="#ffff00"/>
<rect x="260" y="352" width="1" height="3" fill="#ffff00"/>
<rect x="261" y="353" width="1" height="2" fill="#ffff00"/>
<rect x="262" y="353" width="1" height="2" fill="#ffff00"/>
<rect x="263" y="353" width="1" height="2" fill="#ffff00"/>
<rect x="264" y="353" width="1" height="2" fill="#ffff00"/>
<rect x="265" y="352" width="1" height="3" fill="#ffff00"/>
<rect x="266" y="353" width="1" height="2" fill="#ffff00"/>
<rect x="267" y="353" width="1" height="2" fill="#ffff00"/>
<rect x="268" y="353" width="1" height="2" fill="#ffff00"/>
<rect x="269" y="353" width="1" height="2" fill="#ffff00"/>
<rect x="270" y="352" width="1" height="3" fill="#ffff00"/>
<rect x="271" y="353" width="1" height="2" fill="#ffff00"/>
<rect x="272" y="353" width="1" height="2" fill="#ffff00"/>
<rect x="273" y="349" width="1" height="6" fill="#ffff00"/>
<rect x="274" y="353" width="1" height="2" fill="#ffff00"/>
<rect x="275" y="353" width="1" height="2" fill="#ffff00"/>
<rect x="276" y="353" width="1" height="2" fill="#ffff00"/>
<rect x="277" y="353" width="1" height="2" fill="#ffff00"/>
<rect x="278" y="350" width="1" height="5" fill="#ffff00"/>
<rect x="279" y="353" width="1" height="2" fill="#ffff00"/>
<rect x="280" y="353" width="1" height="2" fill="#ffff00"/>
<rect x="281" y="353" width="1" height="2" fill="#ffff00"/>
<rect x="282" y="353" width="1" height="2" fill="#ffff00"/>
<rect x="283" y="353" width="1" height="2" fill="#ffff00"/>
<rect x="284" y="353" width="1" height="2" fill="#ffff00"/>
<rect x="285" y="353" width="1" height="2" fill="#ffff00"/>
<rect x="286" y="352" width="1" height="3" fill="#ffff00"/>
<rect x="287" y="349" width="1" height="6" fill="#ffff00"/>
<rect x="288" y="352" width="1" height="3" fill="#ffff00"/>
<rect x="289" y="352" width="1" height="3" fill="#ffff00"/>
<rect x="290" y="353" width="1" height="2" fill="#ffff00"/>
<rect x="291" y="353" width="1" height="2" fill="#ffff00"/>
<rect x="292" y="353" width="1" height="2" fill="#ffff00"/>
<rect x="293" y="353" width="1" height="2" fill="#ffff00"/>
<rect x="294" y="352" width="1" height="3" fill="#ffff00"/>
<rect x="295" y="353" width="1" height="2" fill="#ffff00"/>
<rect x="296" y="352" width="1" height="3" fill="#ffff00"/>
<rect x="297" y="353" width="1" height="2" fill="#ffff00"/>
<rect x="298" y="353" width="1" height="2" fill="#ffff00"/>
<rect x="299" y="353" width="1" height="2" fill="#ffff00"/>
<rect x="300" y="349" width="1" height="6" fill="#ffff00"/>
<rect x="301" y="352" width="1" height="3" fill="#ffff00"/>
<rect x="302" y="353" width="1" height="2" fill="#ffff00"/>
<rect x="303" y="353" width="1" height="2" fill="#ffff00"/>
<rect x="304" y="353" width="1" height="2" fill="#ffff00"/>
<rect x="305" y="353" width="1" height="2" fill="#ffff00"/>
<rect x="306" y="353" width="1" height="2" fill="#ffff00"/>
<rect x="307" y="353" width="1" height="2" fill="#ffff00"/>
<rect x="308" y="350" width="1" height="5" fill="#ffff00"/>
<rect x="309" y="353" width="1" height="2" fill="#ffff00"/>
<rect x="310" y="353" width="1" height="2" fill="#ffff00"/>
<rect x="311" y="353" width="1" height="2" fill="#ffff00"/>
<rect x="312" y="353" width="1" height="2" fill="#ffff00"/>
<rect x="313" y="352" width="1" height="3" fill="#ffff00"/>
<rect x="314" y="352" width="1" height="3" fill="#ffff00"/>
<rect x="315" y="353" width="1" height="2" fill="#ffff00"/>
<rect x="316" y="353" width="1" height="2" fill="#ffff00"/>
<rect x="317" y="353" width="1" height="2" fill="#ffff00"/>
<rect x="318" y="353" width="1" height="2" fill="#ffff00"/>
<rect x="319" y="352" width="1" height="3" fill="#ffff00"/>
<rect x="320" y="353" width="1" height="2" fill="#ffff00"/>
<rect x="321" y="353" width="1" height="2" fill="#ffff00"/>
<rect x="322" y="352" width="1" height="3" fill="#ffff00"/>
<rect x="323" y="353" width="1" height="2" fill="#ffff00"/>
<rect x="324" y="353" width="1" height="2" fill="#ffff00"/>
<rect x="325" y="352" width="1" height="3" fill="#ffff00"/>
<rect x="326" y="353" width="1" height="2" fill="#ffff00"/>
<rect x="327" y="353" width="1" height="2" fill="#ffff00"/>
<rect x="328" y="352" width="1" height="3" fill="#ffff00"/>
<rect x="329" y="353" width="1" height="2" fill="#ffff00"/>
<rect x="330" y="353" width="1" height="2" fill="#ffff00"/>
<rect x="331" y="353" width="1" height="2" fill="#ffff00"/>
<rect x="332" y="352" width="1" height="3" fill="#ffff00"/>
<rect x="333" y="352" width="1" height="3" fill="#ffff00"/>
<rect x="334" y="353" width="1" height="2" fill="#ffff00"/>
<rect x="335" y="350" width="1" height="5" fill="#ffff00"/>
<rect x="336" y="352" width="1" height="3" fill="#ffff00"/>
<rect x="337" y="352" width="1" height="3" fill="#ffff00"/>
<rect x="338" y="353" width="1" height="2" fill="#ffff00"/>
<rect x="339" y="353" width="1" height="2" fill="#ffff00"/>
<rect x="340" y="352" width="1" height="3" fill="#ffff00"/>
<rect x="341" y="353" width="1" height="2" fill="#ffff00"/>
<rect x="342" y="353" width="1" height="2" fill="#ffff00"/>
<rect x="343" y="352" width="1" height="3" fill="#ffff00"/>
<rect x="344" y="353" width="1" height="2" fill="#ffff00"/>
<rect x="345" y="353" width="1" height="2" fill="#ffff00"/>
<rect x="346" y="352" width="1" height="3" fill="#ffff00"/>
<rect x="347" y="352" width="1" height="3" fill="#ffff00"/>
<rect x="348" y="353" width="1" height="2" fill="#ffff00"/>
<rect x="349" y="352" width="1" height="3" fill="#ffff00"/>
<rect x="350" y="352" width="1" height="3" fill="#ffff00"/>
<rect x="351" y="353" width="1" height="2" fill="#ffff00"/>
<rect x="352" y="353" width="1" height="2" fill="#ffff00"/>
<rect x="353" y="352" width="1" height="3" fill="#ffff00"/>
<rect x="354" y="353" width="1" height="2" fill="#ffff00"/>
<rect x="355" y="353" width="1" height="2" fill="#ffff00"/>
<rect x="356" y="352" width="1" height="3" fill="#ffff00"/>
<rect x="357" y="352" width="1" height="3" fill="#ffff00"/>
<rect x="358" y="352" width="1" height="3" fill="#ffff00"/>
<rect x="359" y="353" width="1" height="2" fill="#ffff00"/>
<rect x="360" y="353" width="1" height="2" fill="#ffff00"/>
<rect x="361" y="353" width="1" height="2" fill="#ffff00"/>
<rect x="362" y="353" width="1" height="2" fill="#ffff00"/>
<rect x="363" y="353" width="1" height="2" fill="#ffff00"/>
<rect x="364" y="353" width="1" height="2" fill="#ffff00"/>
<rect x="365" y="350" width="1" height="5" fill="#ffff00"/>
<rect x="366" y="353" width="1" height="2" fill="#ffff00"/>
<rect x="367" y="353" width="1" height="2" fill="#ffff00"/>
<rect x="368" y="353" width="1" height="2" fill="#ffff00"/>
<rect x="369" y="352" width="1" height="3" fill="#ffff00"/>
<rect x="370" y="353" width="1" height="2" fill="#ffff00"/>
<rect x="371" y="352" width="1" height="3" fill="#ffff00"/>
<rect x="372" y="353" width="1" height="2" fill="#ffff00"/>
<rect x="373" y="352" width="1" height="3" fill="#ffff00"/>
<rect x="374" y="352" width="1" height="3" fill="#ffff00"/>
<rect x="375" y="352" width="1" height="3" fill="#ffff00"/>
<rect x="376" y="353" width="1" height="2" fill="#ffff00"/>
<rect x="377" y="353" width="1" height="2" fill="#ffff00"/>
<rect x="378" y="353" width="1" height="2" fill="#ffff00"/>
<rect x="379" y="353" width="1" height="2" fill="#ffff00"/>
<rect x="380" y="353" width="1" height="2" fill="#ffff00"/>
<rect x="381" y="353" width="1" height="2" fill="#ffff00"/>
<rect x="382" y="353" width="1" height="2" fill="#ffff00"/>
<rect x="383" y="353" width="1" height="2" fill="#ffff00"/>
<rect x="384" y="352" width="1" height="3" fill="#ffff00"/>
<rect x="385" y="352" width="1" height="3" fill="#ffff00"/>
<rect x="386" y="349" width="1" height="6" fill="#ffff00"/>
<rect x="387" y="350" width="1" height="5" fill="#ffff00"/>
<rect x="388" y="351" width="1" height="4" fill="#ffff00"/>
<rect x="389" y="351" width="1" height="4" fill="#ffff00"/>
<rect x="390" y="354" width="1" height="1" fill="#ffff00"/>
<rect x="391" y="354" width="1" height="1" fill="#ffff00"/>
<rect x="392" y="352" width="1" height="3" fill="#ffff00"/>
<rect x="393" y="352" width="1" height="3" fill="#ffff00"/>
<rect x="394" y="353" width="1" height="2" fill="#ffff00"/>
<rect x="395" y="354" width="1" height="1" fill="#ffff00"/>
<rect x="396" y="354" width="1" height="1" fill="#ffff00"/>
<rect x="397" y="351" width="1" height="4" fill="#ffff00"/>
<rect x="398" y="352" width="1" height="3" fill="#ffff00"/>
<rect x="399" y="353" width="1" height="2" fill="#ffff00"/>
<rect x="400" y="351" width="1" height="4" fill="#ffff00"/>
<rect x="401" y="351" width="1" height="4" fill="#ffff00"/>
<rect x="402" y="350" width="1" height="5" fill="#ffff00"/>
<rect x="403" y="351" width="1" height="4" fill="#ffff00"/>
<rect x="404" y="349" width="1" height="6" fill="#ffff00"/>
<rect x="405" y="354" width="1" height="1" fill="#ffff00"/>
<rect x="406" y="354" width="1" height="1" fill="#ffff00"/>
<rect x="407" y="350" width="1" height="5" fill="#ffff00"/>
<rect x="408" y="349" width="1" height="6" fill="#ffff00"/>
<rect x="409" y="348" width="1" height="7" fill="#ffff00"/>
<rect x="410" y="354" width="1" height="1" fill="#ffff00"/>
<rect x="411" y="348" width="1" height="7" fill="#ffff00"/>
<rect x="412" y="349" width="1" height="6" fill="#ffff00"/>
<rect x="413" y="349" width="1" height="6" fill="#ffff00"/>
<rect x="414" y="347" width="1" height="8" fill="#ffff00"/>
<rect x="415" y="347" width="1" height="8" fill="#ffff00"/>
<rect x="416" y="347" width="1" height="8" fill="#ffff00"/>
<rect x="417" y="344" width="1" height="11" fill="#ffff00"/>
<rect x="418" y="345" width="1" height="10" fill="#ffff00"/>
<rect x="419" y="350" width="1" height="5" fill="#ffff00"/>
<rect x="420" y="351" width="1" height="4" fill="#ffff00"/>
<rect x="421" y="343" width="1" height="12" fill="#ffff00"/>
<rect x="422" y="341" width="1" height="14" fill="#ffff00"/>
<rect x="423" y="341" width="1" height="14" fill="#ffff00"/>
<rect x="424" y="340" width="1" height="15" fill="#ffff00"/>
<rect x="425" y="342" width="1" height="13" fill="#ffff00"/>
<rect x="426" y="350" width="1" height="5" fill="#ffff00"/>
<rect x="427" y="348" width="1" height="7" fill="#ffff00"/>
<rect x="428" y="340" width="1" height="15" fill="#ffff00"/>
<rect x="429" y="338" width="1" height="17" fill="#ffff00"/>
<rect x="430" y="342" width="1" height="13" fill="#ffff00"/>
<rect x="431" y="341" width="1" height="14" fill="#ffff00"/>
<rect x="432" y="337" width="1" height="18" fill="#ffff00"/>
<rect x="433" y="336" width="1" height="19" fill="#ffff00"/>
<rect x="434" y="340" width="1" height="15" fill="#ffff00"/>
<rect x="435" y="340" width="1" height="15" fill="#ffff00"/>
<rect x="436" y="337" width="1" height="18" fill="#ffff00"/>
<rect x="437" y="338" width="1" height="17" fill="#ffff00"/>
<rect x="438" y="342" width="1" height="13" fill="#ffff00"/>
<rect x="439" y="337" width="1" height="18" fill="#ffff00"/>
<rect x="440" y="339" width="1" height="16" fill="#ffff00"/>
<rect x="441" y="342" width="1" height="13" fill="#ffff00"/>
<rect x="442" y="339" width="1" height="16" fill="#ffff00"/>
<rect x="443" y="337" width="1" height="18" fill="#ffff00"/>
<rect x="444" y="337" width="1" height="18" fill="#ffff00"/>
<rect x="445" y="334" width="1" height="21" fill="#ffff00"/>
<rect x="446" y="335" width="1" height="20" fill="#ffff00"/>
<rect x="447" y="332" width="1" height="23" fill="#ffff00"/>
<rect x="448" y="331" width="1" height="24" fill="#ffff00"/>
<rect x="449" y="333" width="1" height="22" fill="#ffff00"/>
<rect x="450" y="334" width="1" height="21" fill="#ffff00"/>
<rect x="451" y="335" width="1" height="20" fill="#ffff00"/>
<rect x="452" y="334" width="1" height="21" fill="#ffff00"/>
<rect x="453" y="246" width="1" height="109" fill="#ffff00"/>
<rect x="454" y="332" width="1" height="23" fill="#ffff00"/>
<rect x="455" y="329" width="1" height="26" fill="#ffff00"/>
<rect x="456" y="326" width="1" height="29" fill="#ffff00"/>
<rect x="457" y="324" width="1" height="31" fill="#ffff00"/>
<rect x="458" y="323" width="1" height="32" fill="#ffff00"/>
<rect x="459" y="320" width="1" height="35" fill="#ffff00"/>
<rect x="460" y="319" width="1" height="36" fill="#ffff00"/>
<rect x="461" y="316" width="1" height="39" fill="#ffff00"/>
<rect x="462" y="316" width="1" height="39" fill="#ffff00"/>
<rect x="463" y="310" width="1" height="45" fill="#ffff00"/>
<rect x="464" y="313" width="1" height="42" fill="#ffff00"/>
<rect x="465" y="326" width="1" height="29" fill="#ffff00"/>
<rect x="466" y="324" width="1" height="31" fill="#ffff00"/>
<rect x="467" y="290" width="1" height="65" fill="#ffff00"/>
<rect x="468" y="322" width="1" height="33" fill="#ffff00"/>
<rect x="469" y="320" width="1" height="35" fill="#ffff00"/>
<rect x="470" y="324" width="1" height="31" fill="#ffff00"/>
<rect x="471" y="354" width="1" height="1" fill="#ffff00"/>
<rect x="472" y="353" width="1" height="2" fill="#ffff00"/>
<rect x="473" y="354" width="1" height="1" fill="#ffff00"/>
<rect x="474" y="352" width="1" height="3" fill="#ffff00"/>
<rect x="475" y="352" width="1" height="3" fill="#ffff00"/>
<rect x="476" y="353" width="1" height="2" fill="#ffff00"/>
<rect x="477" y="352" width="1" height="3" fill="#ffff00"/>
<rect x="478" y="349" width="1" height="6" fill="#ffff00"/>
<rect x="479" y="352" width="1" height="3" fill="#ffff00"/>
<rect x="480" y="351" width="1" height="4" fill="#ffff00"/>
<rect x="481" y="353" width="1" height="2" fill="#ffff00"/>
<rect x="482" y="351" width="1" height="4" fill="#ffff00"/>
<rect x="483" y="352" width="1" height="3" fill="#ffff00"/>
<rect x="484" y="352" width="1" height="3" fill="#ffff00"/>
<rect x="485" y="354" width="1" height="1" fill="#ffff00"/>
<rect x="486" y="353" width="1" height="2" fill="#ffff00"/>
<rect x="487" y="352" width="1" height="3" fill="#ffff00"/>
<rect x="488" y="352" width="1" height="3" fill="#ffff00"/>
<rect x="489" y="353" width="1" height="2" fill="#ffff00"/>
<rect x="490" y="352" width="1" height="3" fill="#ffff00"/>
<rect x="491" y="353" width="1" height="2" fill="#ffff00"/>
<rect x="492" y="351" width="1" height="4" fill="#ffff00"/>
<rect x="493" y="351" width="1" height="4" fill="#ffff00"/>
<rect x="494" y="352" width="1" height="3" fill="#ffff00"/>
<rect x="495" y="350" width="1" height="5" fill="#ffff00"/>
<rect x="496" y="349" width="1" height="6" fill="#ffff00"/>
<rect x="497" y="348" width="1" height="7" fill="#ffff00"/>
<rect x="498" y="348" width="1" height="7" fill="#ffff00"/>
<rect x="499" y="346" width="1" height="9" fill="#ffff00"/>
<rect x="500" y="345" width="1" height="10" fill="#ffff00"/>
<rect x="501" y="344" width="1" height="11" fill="#ffff00"/>
<rect x="502" y="342" width="1" height="13" fill="#ffff00"/>
<rect x="503" y="339" width="1" height="16" fill="#ffff00"/>
<rect x="504" y="337" width="1" height="18" fill="#ffff00"/>
<rect x="505" y="338" width="1" height="17" fill="#ffff00"/>
<rect x="506" y="340" width="1" height="15" fill="#ffff00"/>
<rect x="507" y="336" width="1" height="19" fill="#ffff00"/>
<rect x="62" y="299" width="1" height="2" fill="#ff00ff"/>
<rect x="63" y="300" width="1" height="2" fill="#ff00ff"/>
<rect x="64" y="301" width="1" height="2" fill="#ff00ff"/>
<rect x="65" y="297" width="1" height="4" fill="#ff00ff"/>
<rect x="66" y="298" width="1" height="5" fill="#ff00ff"/>
<rect x="67" y="297" width="1" height="5" fill="#ff00ff"/>
<rect x="68" y="298" width="1" height="2" fill="#ff00ff"/>
<rect x="69" y="299" width="1" height="2" fill="#ff00ff"/>
<rect x="70" y="300" width="1" height="2" fill="#ff00ff"/>
<rect x="71" y="301" width="1" height="2" fill="#ff00ff"/>
<rect x="72" y="297" width="1" height="4" fill="#ff00ff"/>
<rect x="73" y="298" width="1" height="5" fill="#ff00ff"/>
<rect x="74" y="302" width="1" height="2" fill="#ff00ff"/>
<rect x="75" y="299" width="1" height="3" fill="#ff00ff"/>
<rect x="76" y="299" width="1" height="2" fill="#ff00ff"/>
<rect x="77" y="298" width="1" height="2" fill="#ff00ff"/>
<rect x="78" y="299" width="1" height="3" fill="#ff00ff"/>
<rect x="79" y="298" width="1" height="3" fill="#ff00ff"/>
<rect x="80" y="299" width="1" height="2" fill="#ff00ff"/>
<rect x="81" y="300" width="1" height="2" fill="#ff00ff"/>
<rect x="82" y="300" width="1" height="2" fill="#ff00ff"/>
<rect x="83" y="296" width="1" height="4" fill="#ff00ff"/>
<rect x="84" y="297" width="1" height="4" fill="#ff00ff"/>
<rect x="85" y="299" width="1" height="2" fill="#ff00ff"/>
<rect x="86" y="300" width="1" height="2" fill="#ff00ff"/>
<rect x="87" y="301" width="1" height="2" fill="#ff00ff"/>
<rect x="88" y="299" width="1" height="2" fill="#ff00ff"/>
<rect x="89" y="300" width="1" height="2" fill="#ff00ff"/>
<rect x="90" y="299" width="1" height="2" fill="#ff00ff"/>
<rect x="91" y="300" width="1" height="2" fill="#ff00ff"/>
<rect x="92" y="298" width="1" height="3" fill="#ff00ff"/>
<rect x="93" y="299" width="1" height="2" fill="#ff00ff"/>
<rect x="94" y="301" width="1" height="2" fill="#ff00ff"/>
<rect x="95" y="299" width="1" height="3" fill="#ff00ff"/>
<rect x="96" y="300" width="1" height="2" fill="#ff00ff"/>
<rect x="97" y="299" width="1" height="2" fill="#ff00ff"/>
<rect x="98" y="300" width="1" height="2" fill="#ff00ff"/>
<rect x="99" y="296" width="1" height="5" fill="#ff00ff"/>
<rect x="100" y="297" width="1" height="4" fill="#ff00ff"/>
<rect x="101" y="299" width="1" height="2" fill="#ff00ff"/>
<rect x="102" y="299" width="1" height="2" fill="#ff00ff"/>
<rect x="103" y="299" width="1" height="2" fill="#ff00ff"/>
<rect x="104" y="300" width="1" height="2" fill="#ff00ff"/>
<rect x="105" y="300" width="1" height="2" fill="#ff00ff"/>
<rect x="106" y="300" width="1" height="2" fill="#ff00ff"/>
<rect x="107" y="299" width="1" height="2" fill="#ff00ff"/>
<rect x="108" y="298" width="1" height="2" fill="#ff00ff"/>
<rect x="109" y="297" width="1" height="2" fill="#ff00ff"/>
<rect x="110" y="298" width="1" height="2" fill="#ff00ff"/>
<rect x="111" y="298" width="1" height="2" fill="#ff00ff"/>
<rect x="112" y="298" width="1" height="2" fill="#ff00ff"/>
<rect x="113" y="297" width="1" height="2" fill="#ff00ff"/>
<rect x="114" y="298" width="1" height="3" fill="#ff00ff"/>
<rect x="115" y="300" width="1" height="2" fill="#ff00ff"/>
<rect x="116" y="300" width="1" height="2" fill="#ff00ff"/>
<rect x="117" y="299" width="1" height="2" fill="#ff00ff"/>
<rect x="118" y="297" width="1" height="2" fill="#ff00ff"/>
<rect x="119" y="297" width="1" height="2" fill="#ff00ff"/>
<rect x="120" y="298" width="1" height="3" fill="#ff00ff"/>
<rect x="121" y="298" width="1" height="2" fill="#ff00ff"/>
<rect x="122" y="299" width="1" height="2" fill="#ff00ff"/>
<rect x="123" y="299" width="1" height="2" fill="#ff00ff"/>
<rect x="124" y="297" width="1" height="2" fill="#ff00ff"/>
<rect x="125" y="297" width="1" height="2" fill="#ff00ff"/>
<rect x="126" y="298" width="1" height="2" fill="#ff00ff"/>
<rect x="127" y="299" width="1" height="2" fill="#ff00ff"/>
<rect x="128" y="298" width="1" height="2" fill="#ff00ff"/>
<rect x="129" y="298" width="1" height="2" fill="#ff00ff"/>
<rect x="130" y="298" width="1" height="2" fill="#ff00ff"/>
<rect x="131" y="299" width="1" height="2" fill="#ff00ff"/>
<rect x="132" y="296" width="1" height="3" fill="#ff00ff"/>
<rect x="133" y="297" width="1" height="2" fill="#ff00ff"/>
<rect x="134" y="277" width="1" height="21" fill="#ff00ff"/>
<rect x="135" y="280" width="1" height="2" fill="#ff00ff"/>
<rect x="136" y="277" width="1" height="3" fill="#ff00ff"/>
<rect x="137" y="274" width="1" height="3" fill="#ff00ff"/>
<rect x="138" y="275" width="1" height="2" fill="#ff00ff"/>
<rect x="139" y="275" width="1" height="2" fill="#ff00ff"/>
<rect x="140" y="272" width="1" height="3" fill="#ff00ff"/>
<rect x="141" y="271" width="1" height="2" fill="#ff00ff"/>
<rect x="142" y="271" width="1" height="2" fill="#ff00ff"/>
<rect x="143" y="272" width="1" height="3" fill="#ff00ff"/>
<rect x="144" y="273" width="1" height="2" fill="#ff00ff"/>
<rect x="145" y="274" width="1" height="2" fill="#ff00ff"/>
<rect x="146" y="272" width="1" height="2" fill="#ff00ff"/>
<rect x="147" y="271" width="1" height="2" fill="#ff00ff"/>
<rect x="148" y="272" width="1" height="2" fill="#ff00ff"/>
<rect x="149" y="273" width="1" height="2" fill="#ff00ff"/>
<rect x="150" y="274" width="1" height="4" fill="#ff00ff"/>
<rect x="151" y="274" width="1" height="3" fill="#ff00ff"/>
<rect x="152" y="273" width="1" height="2" fill="#ff00ff"/>
<rect x="153" y="274" width="1" height="2" fill="#ff00ff"/>
<rect x="154" y="276" width="1" height="2" fill="#ff00ff"/>
<rect x="155" y="277" width="1" height="2" fill="#ff00ff"/>
<rect x="156" y="277" width="1" height="2" fill="#ff00ff"/>
<rect x="157" y="278" width="1" height="2" fill="#ff00ff"/>
<rect x="158" y="277" width="1" height="2" fill="#ff00ff"/>
<rect x="159" y="277" width="1" height="2" fill="#ff00ff"/>
<rect x="160" y="277" width="1" height="2" fill="#ff00ff"/>
<rect x="161" y="274" width="1" height="3" fill="#ff00ff"/>
<rect x="162" y="275" width="1" height="4" fill="#ff00ff"/>
<rect x="163" y="277" width="1" height="2" fill="#ff00ff"/>
<rect x="164" y="277" width="1" height="2" fill="#ff00ff"/>
<rect x="165" y="274" width="1" height="3" fill="#ff00ff"/>
<rect x="166" y="275" width="1" height="4" fill="#ff00ff"/>
<rect x="167" y="277" width="1" height="2" fill="#ff00ff"/>
<rect x="168" y="275" width="1" height="2" fill="#ff00ff"/>
<rect x="169" y="275" width="1" height="2" fill="#ff00ff"/>
<rect x="170" y="276" width="1" height="2" fill="#ff00ff"/>
<rect x="171" y="277" width="1" height="2" fill="#ff00ff"/>
<rect x="172" y="276" width="1" height="2" fill="#ff00ff"/>
<rect x="173" y="276" width="1" height="2" fill="#ff00ff"/>
<rect x="174" y="277" width="1" height="2" fill="#ff00ff"/>
<rect x="175" y="277" width="1" height="2" fill="#ff00ff"/>
<rect x="176" y="277" width="1" height="2" fill="#ff00ff"/>
<rect x="177" y="278" width="1" height="2" fill="#ff00ff"/>
<rect x="178" y="277" width="1" height="2" fill="#ff00ff"/>
<rect x="179" y="266" width="1" height="12" fill="#ff00ff"/>
<rect x="180" y="279" width="1" height="2" fill="#ff00ff"/>
<rect x="181" y="280" width="1" height="2" fill="#ff00ff"/>
<rect x="182" y="281" width="1" height="2" fill="#ff00ff"/>
<rect x="183" y="281" width="1" height="2" fill="#ff00ff"/>
<rect x="184" y="278" width="1" height="3" fill="#ff00ff"/>
<rect x="185" y="279" width="1" height="2" fill="#ff00ff"/>
<rect x="186" y="281" width="1" height="2" fill="#ff00ff"/>
<rect x="187" y="278" width="1" height="3" fill="#ff00ff"/>
<rect x="188" y="279" width="1" height="2" fill="#ff00ff"/>
<rect x="189" y="279" width="1" height="2" fill="#ff00ff"/>
<rect x="190" y="277" width="1" height="2" fill="#ff00ff"/>
<rect x="191" y="278" width="1" height="2" fill="#ff00ff"/>
<rect x="192" y="280" width="1" height="2" fill="#ff00ff"/>
<rect x="193" y="278" width="1" height="3" fill="#ff00ff"/>
<rect x="194" y="279" width="1" height="2" fill="#ff00ff"/>
<rect x="195" y="280" width="1" height="2" fill="#ff00ff"/>
<rect x="196" y="281" width="1" height="2" fill="#ff00ff"/>
<rect x="197" y="280" width="1" height="2" fill="#ff00ff"/>
<rect x="198" y="277" width="1" height="3" fill="#ff00ff"/>
<rect x="199" y="278" width="1" height="2" fill="#ff00ff"/>
<rect x="200" y="276" width="1" height="3" fill="#ff00ff"/>
<rect x="201" y="277" width="1" height="3" fill="#ff00ff"/>
<rect x="202" y="279" width="1" height="2" fill="#ff00ff"/>
<rect x="203" y="277" width="1" height="2" fill="#ff00ff"/>
<rect x="204" y="276" width="1" height="2" fill="#ff00ff"/>
<rect x="205" y="276" width="1" height="2" fill="#ff00ff"/>
<rect x="206" y="277" width="1" height="2" fill="#ff00ff"/>
<rect x="207" y="274" width="1" height="4" fill="#ff00ff"/>
<rect x="208" y="275" width="1" height="2" fill="#ff00ff"/>
<rect x="209" y="274" width="1" height="2" fill="#ff00ff"/>
<rect x="210" y="275" width="1" height="2" fill="#ff00ff"/>
<rect x="211" y="274" width="1" height="2" fill="#ff00ff"/>
<rect x="212" y="275" width="1" height="2" fill="#ff00ff"/>
<rect x="213" y="273" width="1" height="2" fill="#ff00ff"/>
<rect x="214" y="274" width="1" height="3" fill="#ff00ff"/>
<rect x="215" y="275" width="1" height="2" fill="#ff00ff"/>
<rect x="216" y="275" width="1" height="2" fill="#ff00ff"/>
<rect x="217" y="272" width="1" height="3" fill="#ff00ff"/>
<rect x="218" y="273" width="1" height="4" fill="#ff00ff"/>
<rect x="219" y="271" width="1" height="5" fill="#ff00ff"/>
<rect x="220" y="272" width="1" height="2" fill="#ff00ff"/>
<rect x="221" y="271" width="1" height="2" fill="#ff00ff"/>
<rect x="222" y="272" width="1" height="2" fill="#ff00ff"/>
<rect x="223" y="271" width="1" height="2" fill="#ff00ff"/>
<rect x="224" y="269" width="1" height="2" fill="#ff00ff"/>
<rect x="225" y="270" width="1" height="2" fill="#ff00ff"/>
<rect x="226" y="271" width="1" height="2" fill="#ff00ff"/>
<rect x="227" y="270" width="1" height="2" fill="#ff00ff"/>
<rect x="228" y="270" width="1" height="2" fill="#ff00ff"/>
<rect x="229" y="271" width="1" height="2" fill="#ff00ff"/>
<rect x="230" y="271" width="1" height="2" fill="#ff00ff"/>
<rect x="231" y="268" width="1" height="3" fill="#ff00ff"/>
<rect x="232" y="269" width="1" height="2" fill="#ff00ff"/>
<rect x="233" y="269" width="1" height="2" fill="#ff00ff"/>
<rect x="234" y="268" width="1" height="2" fill="#ff00ff"/>
<rect x="235" y="268" width="1" height="2" fill="#ff00ff"/>
<rect x="236" y="268" width="1" height="2" fill="#ff00ff"/>
<rect x="237" y="268" width="1" height="2" fill="#ff00ff"/>
<rect x="238" y="269" width="1" height="2" fill="#ff00ff"/>
<rect x="239" y="268" width="1" height="2" fill="#ff00ff"/>
<rect x="240" y="268" width="1" height="2" fill="#ff00ff"/>
<rect x="241" y="267" width="1" height="2" fill="#ff00ff"/>
<rect x="242" y="268" width="1" height="2" fill="#ff00ff"/>
<rect x="243" y="270" width="1" height="3" fill="#ff00ff"/>
<rect x="244" y="268" width="1" height="4" fill="#ff00ff"/>
<rect x="245" y="269" width="1" height="2" fill="#ff00ff"/>
<rect x="246" y="269" width="1" height="2" fill="#ff00ff"/>
<rect x="247" y="270" width="1" height="2" fill="#ff00ff"/>
<rect x="248" y="271" width="1" height="2" fill="#ff00ff"/>
<rect x="249" y="271" width="1" height="2" fill="#ff00ff"/>
<rect x="250" y="268" width="1" height="3" fill="#ff00ff"/>
<rect x="251" y="268" width="1" height="2" fill="#ff00ff"/>
<rect x="252" y="269" width="1" height="2" fill="#ff00ff"/>
<rect x="253" y="271" width="1" height="3" fill="#ff00ff"/>
<rect x="254" y="272" width="1" height="2" fill="#ff00ff"/>
<rect x="255" y="273" width="1" height="2" fill="#ff00ff"/>
<rect x="256" y="274" width="1" height="2" fill="#ff00ff"/>
<rect x="257" y="273" width="1" height="2" fill="#ff00ff"/>
<rect x="258" y="274" width="1" height="2" fill="#ff00ff"/>
<rect x="259" y="275" width="1" height="2" fill="#ff00ff"/>
<rect x="260" y="275" width="1" height="2" fill="#ff00ff"/>
<rect x="261" y="271" width="1" height="4" fill="#ff00ff"/>
<rect x="262" y="272" width="1" height="2" fill="#ff00ff"/>
<rect x="263" y="273" width="1" height="2" fill="#ff00ff"/>
<rect x="264" y="271" width="1" height="2" fill="#ff00ff"/>
<rect x="265" y="272" width="1" height="2" fill="#ff00ff"/>
<rect x="266" y="270" width="1" height="2" fill="#ff00ff"/>
<rect x="267" y="271" width="1" height="2" fill="#ff00ff"/>
<rect x="268" y="272" width="1" height="2" fill="#ff00ff"/>
<rect x="269" y="269" width="1" height="3" fill="#ff00ff"/>
<rect x="270" y="270" width="1" height="2" fill="#ff00ff"/>
<rect x="271" y="270" width="1" height="2" fill="#ff00ff"/>
<rect x="272" y="271" width="1" height="2" fill="#ff00ff"/>
<rect x="273" y="268" width="1" height="3" fill="#ff00ff"/>
<rect x="274" y="269" width="1" height="2" fill="#ff00ff"/>
<rect x="275" y="267" width="1" height="3" fill="#ff00ff"/>
<rect x="276" y="262" width="1" height="8" fill="#ff00ff"/>
<rect x="277" y="269" width="1" height="2" fill="#ff00ff"/>
<rect x="278" y="269" width="1" height="2" fill="#ff00ff"/>
<rect x="279" y="269" width="1" height="2" fill="#ff00ff"/>
<rect x="280" y="267" width="1" height="2" fill="#ff00ff"/>
<rect x="281" y="268" width="1" height="2" fill="#ff00ff"/>
<rect x="282" y="266" width="1" height="2" fill="#ff00ff"/>
<rect x="283" y="267" width="1" height="3" fill="#ff00ff"/>
<rect x="284" y="268" width="1" height="2" fill="#ff00ff"/>
<rect x="285" y="269" width="1" height="4" fill="#ff00ff"/>
<rect x="286" y="270" width="1" height="2" fill="#ff00ff"/>
<rect x="287" y="271" width="1" height="2" fill="#ff00ff"/>
<rect x="288" y="271" width="1" height="2" fill="#ff00ff"/>
<rect x="289" y="272" width="1" height="2" fill="#ff00ff"/>
<rect x="290" y="271" width="1" height="2" fill="#ff00ff"/>
<rect x="291" y="272" width="1" height="2" fill="#ff00ff"/>
<rect x="292" y="273" width="1" height="2" fill="#ff00ff"/>
<rect x="293" y="273" width="1" height="2" fill="#ff00ff"/>
<rect x="294" y="272" width="1" height="2" fill="#ff00ff"/>
<rect x="295" y="272" width="1" height="2" fill="#ff00ff"/>
<rect x="296" y="273" width="1" height="2" fill="#ff00ff"/>
<rect x="297" y="274" width="1" height="2" fill="#ff00ff"/>
<rect x="298" y="273" width="1" height="2" fill="#ff00ff"/>
<rect x="299" y="271" width="1" height="2" fill="#ff00ff"/>
<rect x="300" y="272" width="1" height="3" fill="#ff00ff"/>
<rect x="301" y="270" width="1" height="4" fill="#ff00ff"/>
<rect x="302" y="271" width="1" height="2" fill="#ff00ff"/>
<rect x="303" y="272" width="1" height="2" fill="#ff00ff"/>
<rect x="304" y="273" width="1" height="2" fill="#ff00ff"/>
<rect x="305" y="274" width="1" height="4" fill="#ff00ff"/>
<rect x="306" y="272" width="1" height="5" fill="#ff00ff"/>
<rect x="307" y="273" width="1" height="5" fill="#ff00ff"/>
<rect x="308" y="273" width="1" height="4" fill="#ff00ff"/>
<rect x="309" y="273" width="1" height="2" fill="#ff00ff"/>
<rect x="310" y="274" width="1" height="2" fill="#ff00ff"/>
<rect x="311" y="271" width="1" height="3" fill="#ff00ff"/>
<rect x="312" y="272" width="1" height="2" fill="#ff00ff"/>
<rect x="313" y="273" width="1" height="3" fill="#ff00ff"/>
<rect x="314" y="274" width="1" height="2" fill="#ff00ff"/>
<rect x="315" y="275" width="1" height="2" fill="#ff00ff"/>
<rect x="316" y="276" width="1" height="2" fill="#ff00ff"/>
<rect x="317" y="277" width="1" height="2" fill="#ff00ff"/>
<rect x="318" y="275" width="1" height="3" fill="#ff00ff"/>
<rect x="319" y="276" width="1" height="3" fill="#ff00ff"/>
<rect x="320" y="278" width="1" height="2" fill="#ff00ff"/>
<rect x="321" y="279" width="1" height="2" fill="#ff00ff"/>
<rect x="322" y="277" width="1" height="2" fill="#ff00ff"/>
<rect x="323" y="278" width="1" height="2" fill="#ff00ff"/>
<rect x="324" y="279" width="1" height="2" fill="#ff00ff"/>
<rect x="325" y="278" width="1" height="2" fill="#ff00ff"/>
<rect x="326" y="279" width="1" height="3" fill="#ff00ff"/>
<rect x="327" y="279" width="1" height="2" fill="#ff00ff"/>
<rect x="328" y="280" width="1" height="2" fill="#ff00ff"/>
<rect x="329" y="281" width="1" height="2" fill="#ff00ff"/>
<rect x="330" y="280" width="1" height="2" fill="#ff00ff"/>
<rect x="331" y="281" width="1" height="2" fill="#ff00ff"/>
<rect x="332" y="279" width="1" height="2" fill="#ff00ff"/>
<rect x="333" y="279" width="1" height="2" fill="#ff00ff"/>
<rect x="334" y="280" width="1" height="2" fill="#ff00ff"/>
<rect x="335" y="281" width="1" height="2" fill="#ff00ff"/>
<rect x="336" y="279" width="1" height="2" fill="#ff00ff"/>
<rect x="337" y="280" width="1" height="2" fill="#ff00ff"/>
<rect x="338" y="279" width="1" height="2" fill="#ff00ff"/>
<rect x="339" y="280" width="1" height="2" fill="#ff00ff"/>
<rect x="340" y="281" width="1" height="2" fill="#ff00ff"/>
<rect x="341" y="281" width="1" height="2" fill="#ff00ff"/>
<rect x="342" y="279" width="1" height="2" fill="#ff00ff"/>
<rect x="343" y="278" width="1" height="2" fill="#ff00ff"/>
<rect x="344" y="276" width="1" height="2" fill="#ff00ff"/>
<rect x="345" y="277" width="1" height="3" fill="#ff00ff"/>
<rect x="346" y="280" width="1" height="2" fill="#ff00ff"/>
<rect x="347" y="279" width="1" height="2" fill="#ff00ff"/>
<rect x="348" y="278" width="1" height="2" fill="#ff00ff"/>
<rect x="349" y="279" width="1" height="2" fill="#ff00ff"/>
<rect x="350" y="280" width="1" height="2" fill="#ff00ff"/>
<rect x="351" y="281" width="1" height="2" fill="#ff00ff"/>
<rect x="352" y="278" width="1" height="3" fill="#ff00ff"/>
<rect x="353" y="279" width="1" height="2" fill="#ff00ff"/>
<rect x="354" y="280" width="1" height="2" fill="#ff00ff"/>
<rect x="355" y="279" width="1" height="2" fill="#ff00ff"/>
<rect x="356" y="280" width="1" height="2" fill="#ff00ff"/>
<rect x="357" y="279" width="1" height="2" fill="#ff00ff"/>
<rect x="358" y="280" width="1" height="2" fill="#ff00ff"/>
<rect x="359" y="280" width="1" height="2" fill="#ff00ff"/>
<rect x="360" y="279" width="1" height="2" fill="#ff00ff"/>
<rect x="361" y="277" width="1" height="2" fill="#ff00ff"/>
<rect x="362" y="278" width="1" height="4" fill="#ff00ff"/>
<rect x="363" y="278" width="1" height="3" fill="#ff00ff"/>
<rect x="364" y="279" width="1" height="2" fill="#ff00ff"/>
<rect x="365" y="277" width="1" height="2" fill="#ff00ff"/>
<rect x="366" y="278" width="1" height="3" fill="#ff00ff"/>
<rect x="367" y="277" width="1" height="3" fill="#ff00ff"/>
<rect x="368" y="277" width="1" height="2" fill="#ff00ff"/>
<rect x="369" y="277" width="1" height="2" fill="#ff00ff"/>
<rect x="370" y="278" width="1" height="4" fill="#ff00ff"/>
<rect x="371" y="276" width="1" height="5" fill="#ff00ff"/>
<rect x="372" y="277" width="1" height="2" fill="#ff00ff"/>
<rect x="373" y="279" width="1" height="2" fill="#ff00ff"/>
<rect x="374" y="277" width="1" height="3" fill="#ff00ff"/>
<rect x="375" y="278" width="1" height="2" fill="#ff00ff"/>
<rect x="376" y="277" width="1" height="2" fill="#ff00ff"/>
<rect x="377" y="278" width="1" height="4" fill="#ff00ff"/>
<rect x="378" y="277" width="1" height="4" fill="#ff00ff"/>
<rect x="379" y="278" width="1" height="2" fill="#ff00ff"/>
<rect x="380" y="277" width="1" height="2" fill="#ff00ff"/>
<rect x="381" y="278" width="1" height="2" fill="#ff00ff"/>
<rect x="382" y="277" width="1" height="2" fill="#ff00ff"/>
<rect x="383" y="278" width="1" height="2" fill="#ff00ff"/>
<rect x="384" y="276" width="1" height="3" fill="#ff00ff"/>
<rect x="385" y="275" width="1" height="2" fill="#ff00ff"/>
<rect x="386" y="276" width="1" height="2" fill="#ff00ff"/>
<rect x="387" y="275" width="1" height="2" fill="#ff00ff"/>
<rect x="388" y="276" width="1" height="5" fill="#ff00ff"/>
<rect x="389" y="277" width="1" height="3" fill="#ff00ff"/>
<rect x="390" y="275" width="1" height="2" fill="#ff00ff"/>
<rect x="391" y="275" width="1" height="2" fill="#ff00ff"/>
<rect x="392" y="275" width="1" height="2" fill="#ff00ff"/>
<rect x="393" y="276" width="1" height="2" fill="#ff00ff"/>
<rect x="394" y="275" width="1" height="2" fill="#ff00ff"/>
<rect x="395" y="276" width="1" height="2" fill="#ff00ff"/>
<rect x="396" y="278" width="1" height="2" fill="#ff00ff"/>
<rect x="397" y="279" width="1" height="2" fill="#ff00ff"/>
<rect x="398" y="277" width="1" height="2" fill="#ff00ff"/>
<rect x="399" y="278" width="1" height="11" fill="#ff00ff"/>
<rect x="400" y="286" width="1" height="2" fill="#ff00ff"/>
<rect x="401" y="272" width="1" height="14" fill="#ff00ff"/>
<rect x="402" y="264" width="1" height="8" fill="#ff00ff"/>
<rect x="321" y="270" width="1" height="85" fill="#ff00ff"/>
<rect x="434" y="280" width="2" height="2" fill="#ff00ff"/>
<rect x="403" y="271" width="1" height="84" fill="#ff00ff"/>
<rect x="404" y="288" width="1" height="67" fill="#ff00ff"/>
<rect x="406" y="255" width="1" height="100" fill="#ff00ff"/>
<rect x="408" y="268" width="1" height="87" fill="#ff00ff"/>
<rect x="409" y="269" width="1" height="86" fill="#ff00ff"/>
<rect x="410" y="271" width="1" height="84" fill="#ff00ff"/>
<rect x="412" y="267" width="1" height="88" fill="#ff00ff"/>
<rect x="416" y="273" width="1" height="82" fill="#ff00ff"/>
<rect x="417" y="283" width="1" height="72" fill="#ff00ff"/>
<rect x="418" y="274" width="1" height="81" fill="#ff00ff"/>
<rect x="421" y="293" width="1" height="62" fill="#ff00ff"/>
<rect x="423" y="277" width="1" height="78" fill="#ff00ff"/>
<rect x="428" y="278" width="1" height="77" fill="#ff00ff"/>
<rect x="430" y="292" width="1" height="63" fill="#ff00ff"/>
<rect x="433" y="280" width="1" height="75" fill="#ff00ff"/>
<rect x="436" y="280" width="1" height="75" fill="#ff00ff"/>
<rect x="441" y="290" width="1" height="65" fill="#ff00ff"/>
<rect x="443" y="280" width="1" height="75" fill="#ff00ff"/>
<rect x="445" y="263" width="1" height="92" fill="#ff00ff"/>
<rect x="448" y="286" width="1" height="69" fill="#ff00ff"/>
<rect x="449" y="295" width="1" height="60" fill="#ff00ff"/>
<rect x="469" y="276" width="1" height="79" fill="#ff00ff"/>
<rect x="470" y="275" width="1" height="2" fill="#ff00ff"/>
<rect x="471" y="273" width="1" height="2" fill="#ff00ff"/>
<rect x="472" y="271" width="1" height="2" fill="#ff00ff"/>
<rect x="473" y="272" width="1" height="2" fill="#ff00ff"/>
<rect x="474" y="273" width="1" height="2" fill="#ff00ff"/>
<rect x="475" y="273" width="1" height="2" fill="#ff00ff"/>
<rect x="476" y="272" width="1" height="2" fill="#ff00ff"/>
<rect x="477" y="272" width="1" height="2" fill="#ff00ff"/>
<rect x="478" y="272" width="1" height="2" fill="#ff00ff"/>
<rect x="479" y="270" width="1" height="2" fill="#ff00ff"/>
<rect x="480" y="271" width="1" height="2" fill="#ff00ff"/>
<rect x="481" y="270" width="1" height="2" fill="#ff00ff"/>
<rect x="482" y="271" width="1" height="2" fill="#ff00ff"/>
<rect x="483" y="268" width="1" height="3" fill="#ff00ff"/>
<rect x="484" y="269" width="1" height="2" fill="#ff00ff"/>
<rect x="485" y="268" width="1" height="2" fill="#ff00ff"/>
<rect x="486" y="269" width="1" height="2" fill="#ff00ff"/>
<rect x="487" y="267" width="1" height="2" fill="#ff00ff"/>
<rect x="488" y="268" width="1" height="2" fill="#ff00ff"/>
<rect x="489" y="267" width="1" height="2" fill="#ff00ff"/>
<rect x="490" y="266" width="1" height="2" fill="#ff00ff"/>
<rect x="491" y="263" width="1" height="3" fill="#ff00ff"/>
<rect x="492" y="264" width="1" height="2" fill="#ff00ff"/>
<rect x="493" y="262" width="1" height="2" fill="#ff00ff"/>
<rect x="494" y="261" width="1" height="2" fill="#ff00ff"/>
<rect x="495" y="260" width="1" height="2" fill="#ff00ff"/>
<rect x="496" y="257" width="1" height="3" fill="#ff00ff"/>
<rect x="497" y="258" width="1" height="2" fill="#ff00ff"/>
<rect x="498" y="256" width="1" height="3" fill="#ff00ff"/>
<rect x="499" y="254" width="1" height="2" fill="#ff00ff"/>
<rect x="500" y="252" width="1" height="2" fill="#ff00ff"/>
<rect x="501" y="251" width="1" height="2" fill="#ff00ff"/>
<rect x="502" y="250" width="1" height="2" fill="#ff00ff"/>
<rect x="503" y="248" width="1" height="2" fill="#ff00ff"/>
<rect x="504" y="245" width="1" height="3" fill="#ff00ff"/>
<rect x="505" y="230" width="1" height="125" fill="#ff00ff"/>
<rect x="516" y="223" width="1" height="132" fill="#c0c0c0"/>
<rect x="18" y="374" width="8" height="1" fill="#808080"/>
<rect x="90" y="374" width="98" height="1" fill="#808080"/>
<rect x="18" y="436" width="170" height="1" fill="#808080"/>
<rect x="18" y="374" width="1" height="63" fill="#808080"/>
<rect x="187" y="374" width="1" height="63" fill="#808080"/>
<rect x="198" y="374" width="8" height="1" fill="#808080"/>
<rect x="280" y="374" width="87" height="1" fill="#808080"/>
<rect x="198" y="436" width="169" height="1" fill="#808080"/>
<rect x="198" y="374" width="1" height="63" fill="#808080"/>
<rect x="366" y="374" width="1" height="63" fill="#808080"/>
<rect x="379" y="374" width="8" height="1" fill="#808080"/>
<rect x="428" y="374" width="121" height="1" fill="#808080"/>
<rect x="379" y="419" width="170" height="1" fill="#808080"/>
<rect x="379" y="374" width="1" height="46" fill="#808080"/>
<rect x="548" y="374" width="1" height="46" fill="#808080"/>
<rect x="28" y="371" width="8" height="8" fill="#000"/>
<rect x="29" y="372" width="6" height="6" fill="#00ffff"/>
<rect x="208" y="371" width="8" height="8" fill="#000"/>
<rect x="209" y="372" width="6" height="6" fill="#ffff00"/>
<rect x="389" y="371" width="8" height="8" fill="#000"/>
<rect x="390" y="372" width="6" height="6" fill="#ff00ff"/>
<path d="M721.5 88.5 H564.5 Q561.5 88.5 561.5 91.5 V153.5 Q561.5 156.5 564.5 156.5 H721.5" fill="none" stroke="#c0c0c0" shape-rendering="auto"/>
<rect x="721" y="89" width="1" height="1" fill="#a0a0a0"/>
<rect x="722" y="90" width="1" height="1" fill="#c0c0c0"/>
<rect x="721" y="155" width="1" height="1" fill="#a0a0a0"/>
<rect x="722" y="154" width="1" height="1" fill="#c0c0c0"/>
<rect x="567" y="88" width="63" height="1" fill="#fff"/>
<rect x="568" y="156" width="45" height="1" fill="#fff"/>
<path d="M721.5 161.5 H564.5 Q561.5 161.5 561.5 164.5 V334.5 Q561.5 337.5 564.5 337.5 H721.5" fill="none" stroke="#c0c0c0" shape-rendering="auto"/>
<rect x="721" y="162" width="1" height="1" fill="#a0a0a0"/>
<rect x="722" y="163" width="1" height="1" fill="#c0c0c0"/>
<rect x="721" y="336" width="1" height="1" fill="#a0a0a0"/>
<rect x="722" y="335" width="1" height="1" fill="#c0c0c0"/>
<rect x="567" y="161" width="46" height="1" fill="#fff"/>
<path d="M721.5 345.5 H564.5 Q561.5 345.5 561.5 348.5 V364.5 Q561.5 367.5 564.5 367.5 H721.5" fill="none" stroke="#c0c0c0" shape-rendering="auto"/>
<rect x="721" y="346" width="1" height="1" fill="#a0a0a0"/>
<rect x="722" y="347" width="1" height="1" fill="#c0c0c0"/>
<rect x="721" y="366" width="1" height="1" fill="#a0a0a0"/>
<rect x="722" y="365" width="1" height="1" fill="#c0c0c0"/>
<path d="M721.5 374.5 H564.5 Q561.5 374.5 561.5 377.5 V433.5 Q561.5 436.5 564.5 436.5 H721.5" fill="none" stroke="#c0c0c0" shape-rendering="auto"/>
<rect x="721" y="375" width="1" height="1" fill="#a0a0a0"/>
<rect x="722" y="376" width="1" height="1" fill="#c0c0c0"/>
<rect x="721" y="435" width="1" height="1" fill="#a0a0a0"/>
<rect x="722" y="434" width="1" height="1" fill="#c0c0c0"/>
<rect x="562.5" y="59.5" width="67" height="18" rx="3" ry="3" fill="#fff" stroke="#000080" shape-rendering="auto"/>
<rect x="564" y="69" width="64" height="7" fill="#c0c0c0"/>
<rect x="564" y="68" width="64" height="1" fill="url(#ck)"/>
<rect x="654.5" y="59.5" width="67" height="18" rx="3" ry="3" fill="#fff" stroke="#000080" shape-rendering="auto"/>
<rect x="656" y="69" width="64" height="7" fill="#c0c0c0"/>
<rect x="656" y="68" width="64" height="1" fill="url(#ck)"/>
<rect x="631.5" y="170.5" width="82" height="19" fill="#fff" stroke="#808080" stroke-dasharray="1 1"/>
<rect x="696" y="171" width="16" height="17" fill="#c0c0c0"/>
<rect x="697" y="172" width="14" height="5" fill="#fff"/>
<rect x="697" y="177" width="14" height="1" fill="url(#ck)"/>
<rect x="696" y="171" width="16" height="1" fill="#808080"/>
<rect x="696" y="172" width="1" height="16" fill="#808080"/>
<rect x="711" y="172" width="1" height="16" fill="#404040"/>
<rect x="696" y="187" width="16" height="1" fill="#404040"/>
<path d="M700.5 177.5 L704 181.5 L707.5 177.5" stroke="#000" stroke-width="2" fill="none" shape-rendering="auto"/>
<rect x="631.5" y="194.5" width="69" height="17" fill="#fff" stroke="#808080" stroke-dasharray="1 1"/>
<rect x="631.5" y="217.5" width="69" height="18" fill="#fff" stroke="#808080" stroke-dasharray="1 1"/>
<rect x="569.5" y="242.5" width="12" height="12" fill="#fff" stroke="#008080"/>
<rect x="569.5" y="242.5" width="12" height="12" fill="none" stroke="#000080" stroke-dasharray="2 1"/>
<rect x="571" y="244" width="1" height="1" fill="#c0c0c0"/>
<rect x="573" y="244" width="1" height="1" fill="#c0c0c0"/>
<rect x="572" y="245" width="1" height="1" fill="#c0c0c0"/>
<rect x="571" y="246" width="1" height="1" fill="#c0c0c0"/>
<rect x="574" y="245" width="1" height="1" fill="#c0c0c0"/>
<rect x="573" y="247" width="1" height="1" fill="#c0c0c0"/>
<rect x="571" y="248" width="1" height="1" fill="#c0c0c0"/>
<rect x="575" y="244" width="1" height="1" fill="#c0c0c0"/>
<rect x="572" y="250" width="1" height="1" fill="#c0c0c0"/>
<rect x="574" y="250" width="1" height="1" fill="#c0c0c0"/>
<rect x="569.5" y="261.5" width="12" height="12" fill="#fff" stroke="#008080"/>
<rect x="569.5" y="261.5" width="12" height="12" fill="none" stroke="#000080" stroke-dasharray="2 1"/>
<rect x="571" y="263" width="1" height="1" fill="#c0c0c0"/>
<rect x="573" y="263" width="1" height="1" fill="#c0c0c0"/>
<rect x="572" y="264" width="1" height="1" fill="#c0c0c0"/>
<rect x="571" y="265" width="1" height="1" fill="#c0c0c0"/>
<rect x="574" y="264" width="1" height="1" fill="#c0c0c0"/>
<rect x="573" y="266" width="1" height="1" fill="#c0c0c0"/>
<rect x="571" y="267" width="1" height="1" fill="#c0c0c0"/>
<rect x="575" y="263" width="1" height="1" fill="#c0c0c0"/>
<rect x="572" y="269" width="1" height="1" fill="#c0c0c0"/>
<rect x="574" y="269" width="1" height="1" fill="#c0c0c0"/>
<path d="M572 267.5 L574.5 270.5 L579 265" stroke="#008000" stroke-width="2.2" fill="none" shape-rendering="auto"/>
<rect x="569.5" y="276.5" width="12" height="12" fill="#fff" stroke="#008080"/>
<rect x="569.5" y="276.5" width="12" height="12" fill="none" stroke="#000080" stroke-dasharray="2 1"/>
<rect x="571" y="278" width="1" height="1" fill="#c0c0c0"/>
<rect x="573" y="278" width="1" height="1" fill="#c0c0c0"/>
<rect x="572" y="279" width="1" height="1" fill="#c0c0c0"/>
<rect x="571" y="280" width="1" height="1" fill="#c0c0c0"/>
<rect x="574" y="279" width="1" height="1" fill="#c0c0c0"/>
<rect x="573" y="281" width="1" height="1" fill="#c0c0c0"/>
<rect x="571" y="282" width="1" height="1" fill="#c0c0c0"/>
<rect x="575" y="278" width="1" height="1" fill="#c0c0c0"/>
<rect x="572" y="284" width="1" height="1" fill="#c0c0c0"/>
<rect x="574" y="284" width="1" height="1" fill="#c0c0c0"/>
<path d="M572 282.5 L574.5 285.5 L579 280" stroke="#008000" stroke-width="2.2" fill="none" shape-rendering="auto"/>
<rect x="569.5" y="291.5" width="12" height="12" fill="#fff" stroke="#008080"/>
<rect x="569.5" y="291.5" width="12" height="12" fill="none" stroke="#000080" stroke-dasharray="2 1"/>
<rect x="571" y="293" width="1" height="1" fill="#c0c0c0"/>
<rect x="573" y="293" width="1" height="1" fill="#c0c0c0"/>
<rect x="572" y="294" width="1" height="1" fill="#c0c0c0"/>
<rect x="571" y="295" width="1" height="1" fill="#c0c0c0"/>
<rect x="574" y="294" width="1" height="1" fill="#c0c0c0"/>
<rect x="573" y="296" width="1" height="1" fill="#c0c0c0"/>
<rect x="571" y="297" width="1" height="1" fill="#c0c0c0"/>
<rect x="575" y="293" width="1" height="1" fill="#c0c0c0"/>
<rect x="572" y="299" width="1" height="1" fill="#c0c0c0"/>
<rect x="574" y="299" width="1" height="1" fill="#c0c0c0"/>
<path d="M572 297.5 L574.5 300.5 L579 295" stroke="#008000" stroke-width="2.2" fill="none" shape-rendering="auto"/>
<rect x="569.5" y="306.5" width="12" height="12" fill="#fff" stroke="#008080"/>
<rect x="569.5" y="306.5" width="12" height="12" fill="none" stroke="#000080" stroke-dasharray="2 1"/>
<rect x="571" y="308" width="1" height="1" fill="#c0c0c0"/>
<rect x="573" y="308" width="1" height="1" fill="#c0c0c0"/>
<rect x="572" y="309" width="1" height="1" fill="#c0c0c0"/>
<rect x="571" y="310" width="1" height="1" fill="#c0c0c0"/>
<rect x="574" y="309" width="1" height="1" fill="#c0c0c0"/>
<rect x="573" y="311" width="1" height="1" fill="#c0c0c0"/>
<rect x="571" y="312" width="1" height="1" fill="#c0c0c0"/>
<rect x="575" y="308" width="1" height="1" fill="#c0c0c0"/>
<rect x="572" y="314" width="1" height="1" fill="#c0c0c0"/>
<rect x="574" y="314" width="1" height="1" fill="#c0c0c0"/>
<path d="M572 312.5 L574.5 315.5 L579 310" stroke="#008000" stroke-width="2.2" fill="none" shape-rendering="auto"/>
<rect x="569.5" y="321.5" width="12" height="12" fill="#fff" stroke="#c0c0c0"/>
<path d="M572 327.5 L574.5 330.5 L579 325" stroke="#c0c0c0" stroke-width="2.2" fill="none" shape-rendering="auto"/>
</svg>
<div id="tx">
<div class="t l b" style="top:7.50px;font-size:13px;color:#000;left:7.00px;letter-spacing:0.9px;word-spacing:-1.5px;-webkit-text-stroke:0;transform:scaleX(0.9835);">CD Speed : Disc Quality Test - BENQ</div>
<div class="t l b" style="top:7.50px;font-size:13px;color:#000;left:272.50px;letter-spacing:0.9px;word-spacing:-1.5px;-webkit-text-stroke:0;transform:scaleX(0.9403);">DVD DD DW1620</div>
<div class="t l b" style="top:7.50px;font-size:13px;color:#000;left:399.50px;letter-spacing:0.9px;word-spacing:-1.5px;-webkit-text-stroke:0;transform:scaleX(0.9135);">B7V9</div>
<div class="t l" style="top:36.84px;font-size:12px;color:#000;left:22.50px;transform:scaleX(0.9607);">Disc Quality</div>
<div class="t r" style="top:169.67px;font-size:12.5px;color:#000;right:688.80px;transform:scaleX(0.8150);">200</div>
<div class="t r" style="top:143.67px;font-size:12.5px;color:#000;right:688.80px;transform:scaleX(0.8150);">400</div>
<div class="t r" style="top:117.67px;font-size:12.5px;color:#000;right:688.80px;transform:scaleX(0.8150);">600</div>
<div class="t r" style="top:91.67px;font-size:12.5px;color:#000;right:688.80px;transform:scaleX(0.8150);">800</div>
<div class="t r" style="top:64.67px;font-size:12.5px;color:#000;right:688.80px;transform:scaleX(0.8270);">1000</div>
<div class="t l" style="top:179.67px;font-size:12.5px;color:#000;left:534.00px;transform:scaleX(0.7191);">2</div>
<div class="t l" style="top:163.67px;font-size:12.5px;color:#000;left:534.00px;transform:scaleX(0.7191);">4</div>
<div class="t l" style="top:146.67px;font-size:12.5px;color:#000;left:534.00px;transform:scaleX(0.7191);">6</div>
<div class="t l" style="top:130.67px;font-size:12.5px;color:#000;left:534.00px;transform:scaleX(0.7191);">8</div>
<div class="t l" style="top:114.67px;font-size:12.5px;color:#000;left:533.50px;transform:scaleX(0.7910);">10</div>
<div class="t l" style="top:98.67px;font-size:12.5px;color:#000;left:533.50px;transform:scaleX(0.7910);">12</div>
<div class="t l" style="top:81.67px;font-size:12.5px;color:#000;left:533.50px;transform:scaleX(0.7910);">14</div>
<div class="t l" style="top:64.67px;font-size:12.5px;color:#000;left:533.50px;transform:scaleX(0.7910);">16</div>
<div class="t r" style="top:319.67px;font-size:12.5px;color:#000;right:688.80px;transform:scaleX(0.7910);">40</div>
<div class="t l" style="top:319.67px;font-size:12.5px;color:#000;left:534.00px;transform:scaleX(0.7191);">4</div>
<div class="t r" style="top:293.67px;font-size:12.5px;color:#000;right:688.80px;transform:scaleX(0.7910);">80</div>
<div class="t l" style="top:293.67px;font-size:12.5px;color:#000;left:534.00px;transform:scaleX(0.7191);">8</div>
<div class="t r" style="top:267.67px;font-size:12.5px;color:#000;right:688.80px;transform:scaleX(0.8150);">120</div>
<div class="t l" style="top:267.67px;font-size:12.5px;color:#000;left:533.00px;transform:scaleX(0.7910);">12</div>
<div class="t r" style="top:241.67px;font-size:12.5px;color:#000;right:688.80px;transform:scaleX(0.8150);">160</div>
<div class="t l" style="top:241.67px;font-size:12.5px;color:#000;left:533.00px;transform:scaleX(0.7910);">16</div>
<div class="t r" style="top:214.67px;font-size:12.5px;color:#000;right:688.80px;transform:scaleX(0.8150);">200</div>
<div class="t l" style="top:214.67px;font-size:12.5px;color:#000;left:533.00px;transform:scaleX(0.7910);">20</div>
<div class="t l" style="top:204.67px;font-size:12.5px;color:#000;left:56.80px;transform:scaleX(0.7475);">0.0</div>
<div class="t l" style="top:354.67px;font-size:12.5px;color:#000;left:56.80px;transform:scaleX(0.7475);">0.0</div>
<div class="t l" style="top:204.67px;font-size:12.5px;color:#000;left:108.70px;transform:scaleX(0.7475);">0.5</div>
<div class="t l" style="top:354.67px;font-size:12.5px;color:#000;left:108.70px;transform:scaleX(0.7475);">0.5</div>
<div class="t l" style="top:204.67px;font-size:12.5px;color:#000;left:160.60px;transform:scaleX(0.7475);">1.0</div>
<div class="t l" style="top:354.67px;font-size:12.5px;color:#000;left:160.60px;transform:scaleX(0.7475);">1.0</div>
<div class="t l" style="top:204.67px;font-size:12.5px;color:#000;left:212.50px;transform:scaleX(0.7475);">1.5</div>
<div class="t l" style="top:354.67px;font-size:12.5px;color:#000;left:212.50px;transform:scaleX(0.7475);">1.5</div>
<div class="t l" style="top:204.67px;font-size:12.5px;color:#000;left:264.40px;transform:scaleX(0.7475);">2.0</div>
<div class="t l" style="top:354.67px;font-size:12.5px;color:#000;left:264.40px;transform:scaleX(0.7475);">2.0</div>
<div class="t l" style="top:204.67px;font-size:12.5px;color:#000;left:316.30px;transform:scaleX(0.7475);">2.5</div>
<div class="t l" style="top:354.67px;font-size:12.5px;color:#000;left:316.30px;transform:scaleX(0.7475);">2.5</div>
<div class="t l" style="top:204.67px;font-size:12.5px;color:#000;left:368.20px;transform:scaleX(0.7475);">3.0</div>
<div class="t l" style="top:354.67px;font-size:12.5px;color:#000;left:368.20px;transform:scaleX(0.7475);">3.0</div>
<div class="t l" style="top:204.67px;font-size:12.5px;color:#000;left:420.10px;transform:scaleX(0.7475);">3.5</div>
<div class="t l" style="top:354.67px;font-size:12.5px;color:#000;left:420.10px;transform:scaleX(0.7475);">3.5</div>
<div class="t l" style="top:204.67px;font-size:12.5px;color:#000;left:472.00px;transform:scaleX(0.7475);">4.0</div>
<div class="t l" style="top:354.67px;font-size:12.5px;color:#000;left:472.00px;transform:scaleX(0.7475);">4.0</div>
<div class="t l" style="top:204.67px;font-size:12.5px;color:#000;left:523.90px;transform:scaleX(0.7475);">4.5</div>
<div class="t l" style="top:354.67px;font-size:12.5px;color:#000;left:523.90px;transform:scaleX(0.7475);">4.5</div>
<div class="t l" style="top:60.00px;font-size:13px;color:#000;left:584.00px;transform:scaleX(0.8846);">開始</div>
<div class="t l" style="top:60.00px;font-size:13px;color:#000;left:667.50px;transform:scaleX(0.8995);">終了(<u>X</u>)</div>
<div class="t l" style="top:80.00px;font-size:13px;color:#0000ff;left:569.00px;transform:scaleX(0.7564);">ディスク情報</div>
<div class="t l" style="top:92.60px;font-size:13px;color:#000;left:568.00px;transform:scaleX(0.6452);">タイプ:</div>
<div class="t l" style="top:92.94px;font-size:12px;color:#000080;left:616.50px;">DVD-R</div>
<div class="t l" style="top:107.84px;font-size:12px;color:#000;left:568.00px;transform:scaleX(0.9124);">ID:</div>
<div class="t l" style="top:107.84px;font-size:12px;color:#000080;left:616.50px;transform:scaleX(0.8978);">ProdiscF01</div>
<div class="t l" style="top:123.00px;font-size:13px;color:#000;left:568.00px;transform:scaleX(0.9114);">日付:</div>
<div class="t l" style="top:123.34px;font-size:12px;color:#000080;left:616.50px;transform:scaleX(0.9349);">15 June 2005</div>
<div class="t l" style="top:138.34px;font-size:12px;color:#000;left:568.00px;transform:scaleX(0.9173);">Label:</div>
<div class="t l" style="top:138.34px;font-size:12px;color:#000080;left:616.50px;transform:scaleX(0.8628);">CDS_TEST_B2</div>
<div class="t l" style="top:153.14px;font-size:12px;color:#0000ff;left:569.50px;transform:scaleX(0.9686);">Settings</div>
<div class="t l" style="top:170.50px;font-size:13px;color:#000;left:568.50px;transform:scaleX(0.9038);">転送速度</div>
<div class="t l" style="top:172.04px;font-size:12px;color:#000;left:634.50px;transform:scaleX(0.9159);">6 X</div>
<div class="t l" style="top:196.00px;font-size:13px;color:#000;left:568.50px;transform:scaleX(0.8846);">開始</div>
<div class="t l" style="top:195.14px;font-size:12px;color:#000;left:633.50px;transform:scaleX(0.9369);">0000 MB</div>
<div class="t l" style="top:218.50px;font-size:13px;color:#000;left:568.50px;transform:scaleX(0.9038);">終了位置</div>
<div class="t l" style="top:218.04px;font-size:12px;color:#000;left:633.50px;transform:scaleX(0.9369);">4489 MB</div>
<div class="t l" style="top:240.84px;font-size:12px;color:#000;left:585.00px;transform:scaleX(0.9290);">Quick Scan</div>
<div class="t l" style="top:259.84px;font-size:12px;color:#000;left:585.00px;transform:scaleX(0.9387);">Show C1/PIE</div>
<div class="t l" style="top:274.64px;font-size:12px;color:#000;left:585.00px;transform:scaleX(0.9476);">Show C2/PIF</div>
<div class="t l" style="top:289.64px;font-size:12px;color:#000;left:585.00px;transform:scaleX(0.9771);">Show Jitter</div>
<div class="t l" style="top:304.74px;font-size:12px;color:#000;left:585.00px;transform:scaleX(0.9143);">Show Read Speed</div>
<div class="t l" style="top:320.04px;font-size:12px;color:#a0a0a0;left:585.00px;transform:scaleX(0.9226);">Show Write Speed</div>
<div class="t l" style="top:348.00px;font-size:13px;color:#000;left:568.50px;transform:scaleX(0.7432);">品質スコア:</div>
<div class="t r" style="top:348.34px;font-size:12px;color:#000080;right:36.00px;transform:scaleX(0.9000);">0</div>
<div class="t l" style="top:380.00px;font-size:13px;color:#000;left:568.50px;transform:scaleX(0.8809);">進行状況:</div>
<div class="t r" style="top:380.34px;font-size:12px;color:#000080;right:36.00px;transform:scaleX(0.8228);">100 %</div>
<div class="t l" style="top:399.50px;font-size:13px;color:#000;left:568.50px;transform:scaleX(0.6557);">ポジション:</div>
<div class="t r" style="top:399.84px;font-size:12px;color:#000080;right:36.50px;transform:scaleX(0.9265);">4398 MB</div>
<div class="t l" style="top:417.00px;font-size:13px;color:#000;left:568.50px;transform:scaleX(0.8439);">速度:</div>
<div class="t r" style="top:417.34px;font-size:12px;color:#000080;right:36.00px;transform:scaleX(0.9000);">0.45 X</div>
<div class="t l" style="top:366.34px;font-size:12px;color:#000;left:41.00px;transform:scaleX(0.9083);">PI Errors</div>
<div class="t l" style="top:366.34px;font-size:12px;color:#000;left:221.00px;transform:scaleX(0.9240);">PI Failures</div>
<div class="t l" style="top:366.34px;font-size:12px;color:#000;left:402.50px;transform:scaleX(0.9610);">Jitter</div>
<div class="t l" style="top:380.80px;font-size:13px;color:#000;left:26.50px;transform:scaleX(0.8945);">平均:</div>
<div class="t r" style="top:381.14px;font-size:12px;color:#000080;right:567.50px;transform:scaleX(0.9000);">78.49</div>
<div class="t l" style="top:399.00px;font-size:13px;color:#000;left:26.50px;transform:scaleX(0.8945);">最大:</div>
<div class="t r" style="top:399.34px;font-size:12px;color:#000080;right:567.50px;transform:scaleX(0.9000);">816</div>
<div class="t l" style="top:416.50px;font-size:13px;color:#000;left:26.50px;transform:scaleX(0.9027);">合計 :</div>
<div class="t r" style="top:416.84px;font-size:12px;color:#000080;right:567.50px;transform:scaleX(0.9000);">1028052</div>
<div class="t l" style="top:380.80px;font-size:13px;color:#000;left:207.50px;transform:scaleX(0.8945);">平均:</div>
<div class="t r" style="top:381.14px;font-size:12px;color:#000080;right:386.50px;transform:scaleX(0.9000);">2.95</div>
<div class="t l" style="top:399.00px;font-size:13px;color:#000;left:207.50px;transform:scaleX(0.8945);">最大:</div>
<div class="t r" style="top:399.34px;font-size:12px;color:#000080;right:386.50px;transform:scaleX(0.9000);">165</div>
<div class="t l" style="top:416.50px;font-size:13px;color:#000;left:207.50px;transform:scaleX(0.9027);">合計 :</div>
<div class="t r" style="top:416.84px;font-size:12px;color:#000080;right:386.50px;transform:scaleX(0.9000);">21695</div>
<div class="t l" style="top:380.80px;font-size:13px;color:#000;left:388.50px;transform:scaleX(0.8945);">平均:</div>
<div class="t r" style="top:381.14px;font-size:12px;color:#000080;right:204.50px;transform:scaleX(0.8298);">9.85 %</div>
<div class="t l" style="top:399.00px;font-size:13px;color:#000;left:388.50px;transform:scaleX(0.8945);">最大:</div>
<div class="t r" style="top:399.34px;font-size:12px;color:#000080;right:204.50px;transform:scaleX(0.8298);">19.0 %</div>
<div class="t l" style="top:422.34px;font-size:12px;color:#000;left:389.30px;transform:scaleX(0.9072);">PO Failures:</div>
<div class="t r" style="top:422.34px;font-size:12px;color:#000080;right:205.50px;transform:scaleX(0.9000);">10365</div>
</div>
</body></html>
